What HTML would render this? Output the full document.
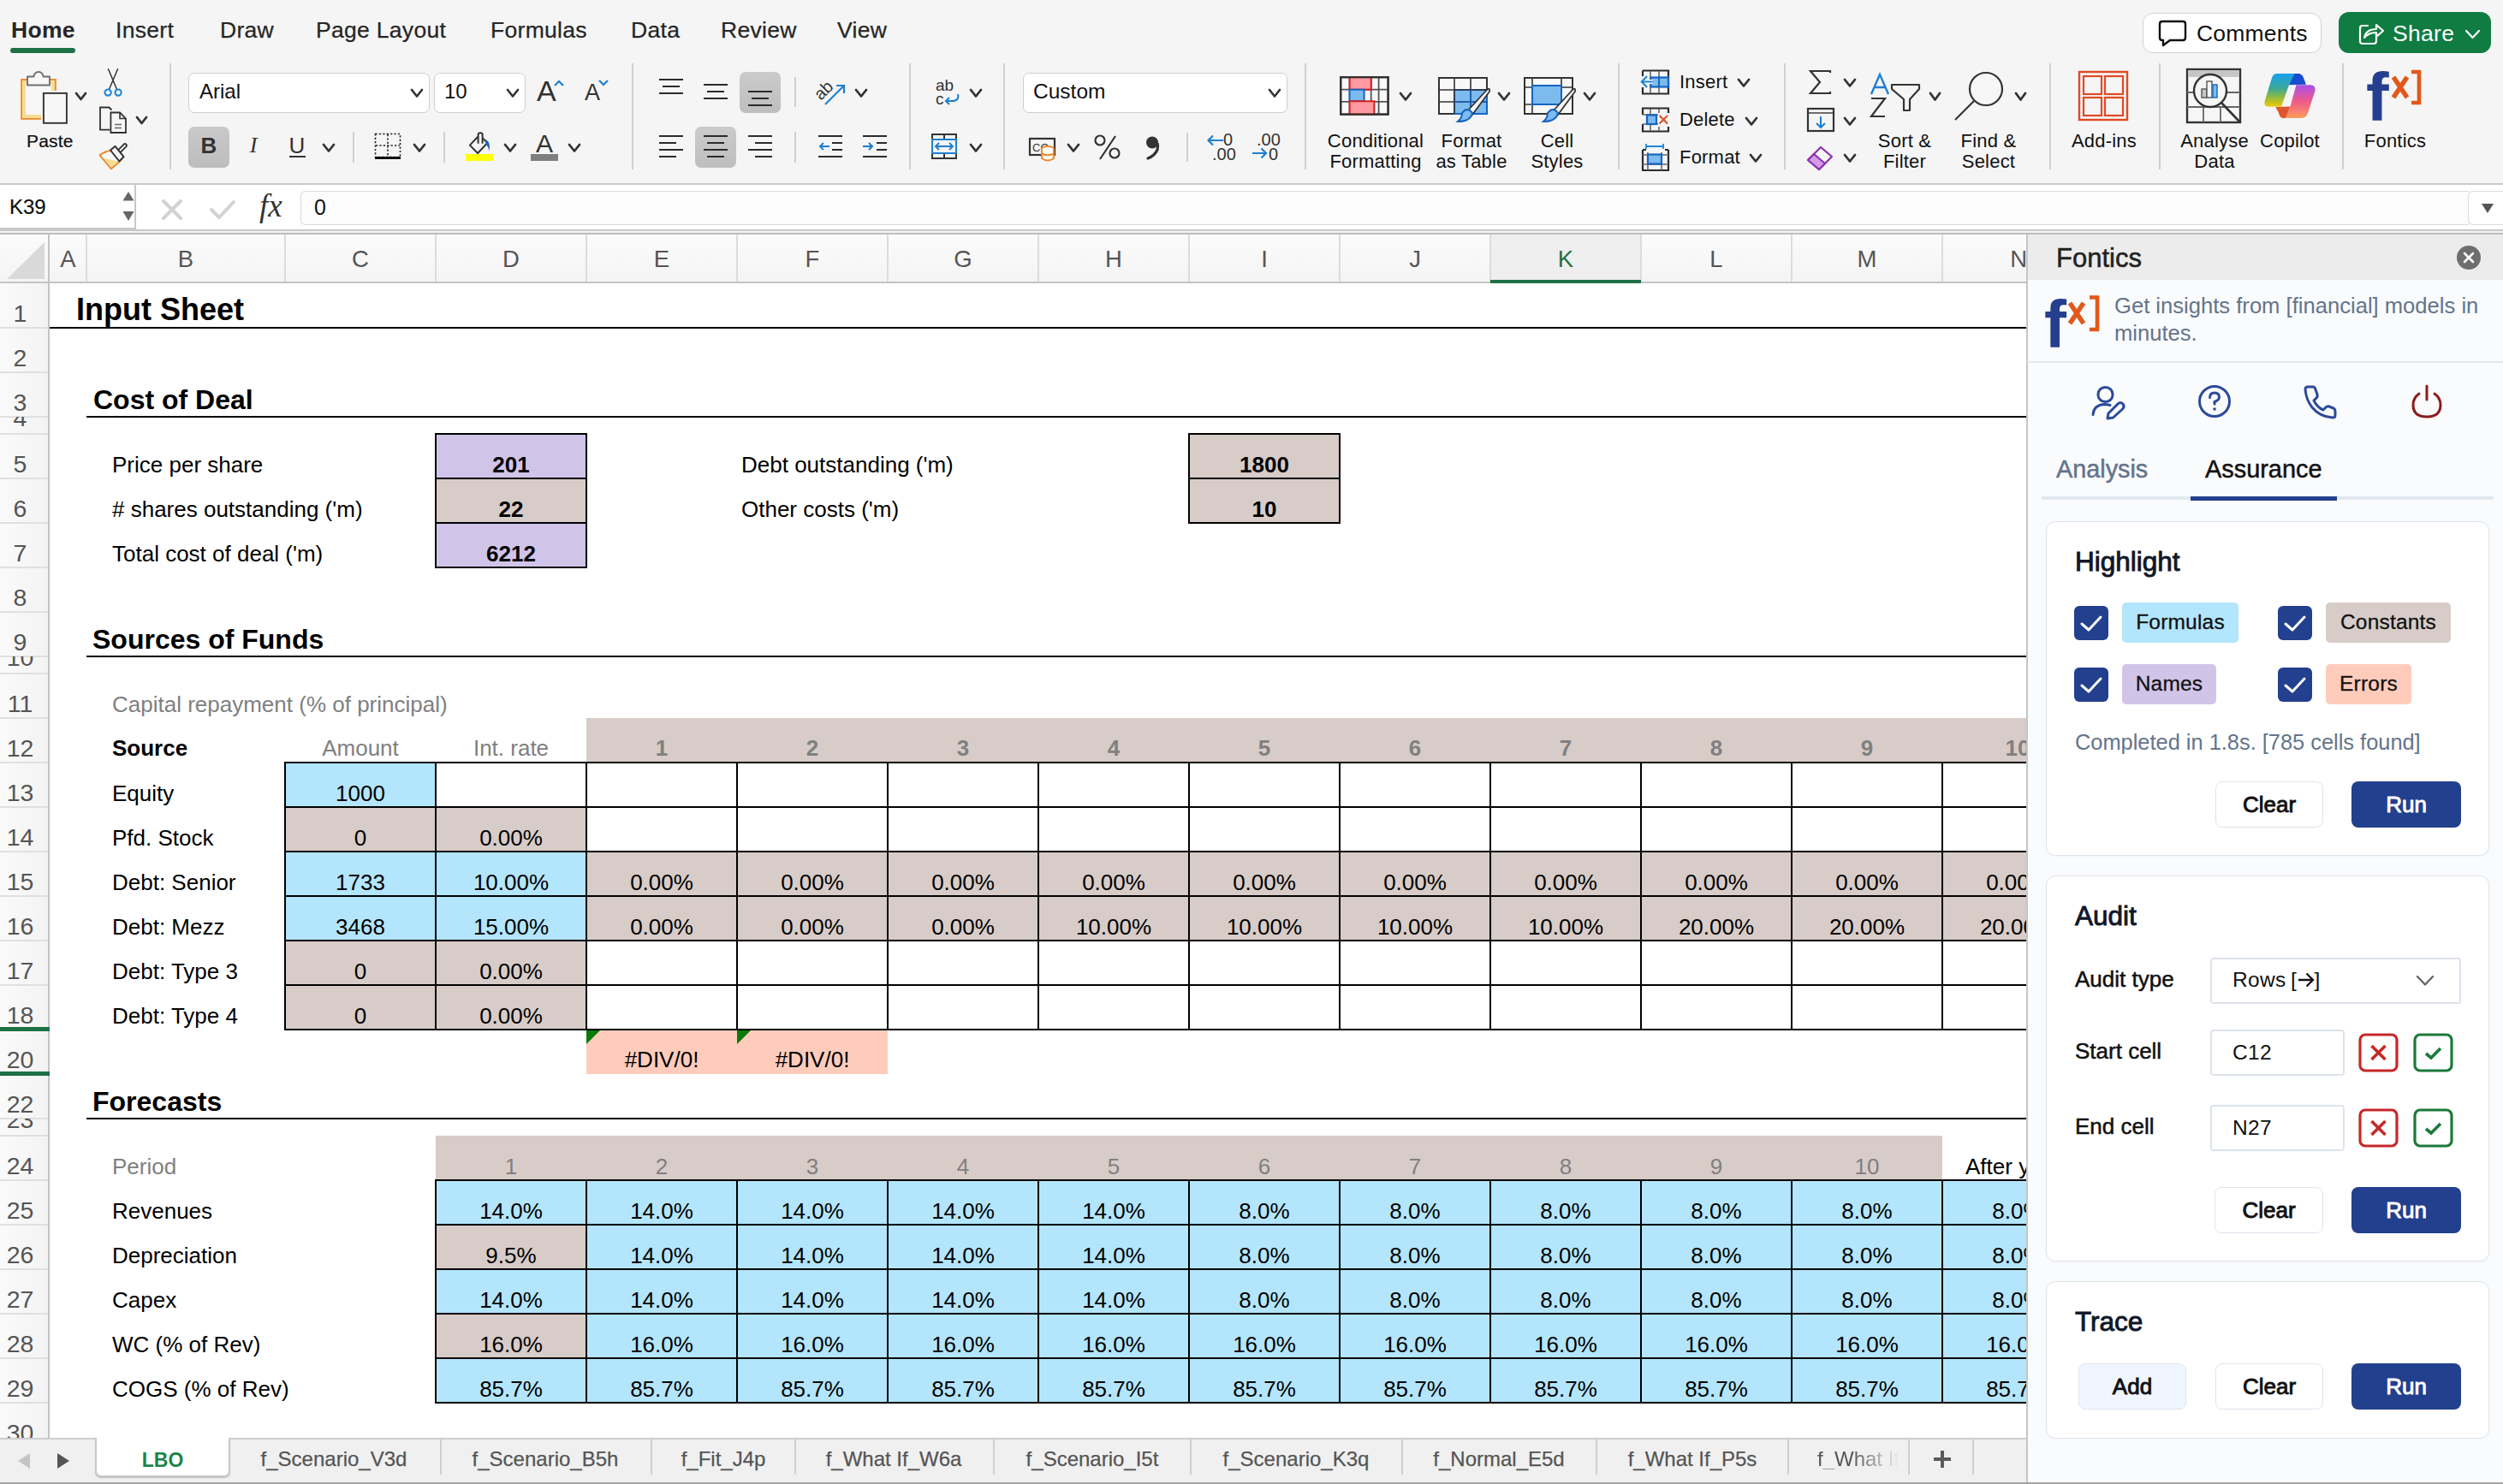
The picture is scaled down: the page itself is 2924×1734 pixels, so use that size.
<!DOCTYPE html>
<html><head><meta charset="utf-8"><title>Excel - Fontics</title>
<style>
html,body{margin:0;padding:0;}
body{width:2924px;height:1734px;position:relative;overflow:hidden;background:#f3f3f3;font-family:"Liberation Sans", sans-serif;}
.a{position:absolute;}
.t{white-space:nowrap;}
svg.a{overflow:visible;}
</style></head><body>
<div class="a" style="left:0px;top:0px;width:2924px;height:216px;background:#f5f5f5;"></div>
<div class="a" style="left:0px;top:214px;width:2924px;height:2px;background:#c9c9c9;"></div>
<div class="a t" style="top:22.07px;font-size:26.5px;line-height:26.5px;color:#262626;font-weight:700;letter-spacing:0.3px;left:13px;">Home</div>
<div class="a t" style="top:22.07px;font-size:26.5px;line-height:26.5px;color:#262626;-webkit-text-stroke:0.25px #262626;letter-spacing:0.3px;left:135px;">Insert</div>
<div class="a t" style="top:22.07px;font-size:26.5px;line-height:26.5px;color:#262626;-webkit-text-stroke:0.25px #262626;letter-spacing:0.3px;left:257px;">Draw</div>
<div class="a t" style="top:22.07px;font-size:26.5px;line-height:26.5px;color:#262626;-webkit-text-stroke:0.25px #262626;letter-spacing:0.3px;left:369px;">Page Layout</div>
<div class="a t" style="top:22.07px;font-size:26.5px;line-height:26.5px;color:#262626;-webkit-text-stroke:0.25px #262626;letter-spacing:0.3px;left:573px;">Formulas</div>
<div class="a t" style="top:22.07px;font-size:26.5px;line-height:26.5px;color:#262626;-webkit-text-stroke:0.25px #262626;letter-spacing:0.3px;left:737px;">Data</div>
<div class="a t" style="top:22.07px;font-size:26.5px;line-height:26.5px;color:#262626;-webkit-text-stroke:0.25px #262626;letter-spacing:0.3px;left:842px;">Review</div>
<div class="a t" style="top:22.07px;font-size:26.5px;line-height:26.5px;color:#262626;-webkit-text-stroke:0.25px #262626;letter-spacing:0.3px;left:978px;">View</div>
<div class="a" style="left:12px;top:56px;width:76px;height:6px;background:#1e7145;border-radius:3px;"></div>
<div class="a" style="left:2503px;top:14.5px;width:208.5px;height:47.0px;background:#fff;border:1.5px solid #d2d2d2;border-radius:12px;box-sizing:border-box;"></div>
<svg class="a" style="left:2520px;top:22px;" width="36" height="34" viewBox="0 0 36 34"><path d="M6 3 H30 Q33 3 33 6 V22 Q33 25 30 25 H15 L7 31 V25 H6 Q3 25 3 22 V6 Q3 3 6 3 Z" fill="none" stroke="#111" stroke-width="2.4" stroke-linejoin="round"/></svg>
<div class="a t" style="top:25.57px;font-size:26.5px;line-height:26.5px;color:#111;letter-spacing:0.2px;left:2566px;">Comments</div>
<div class="a" style="left:2732px;top:14px;width:178px;height:48px;background:#107c41;border-radius:12px;"></div>
<svg class="a" style="left:2752px;top:22px;" width="36" height="32" viewBox="0 0 36 32"><path d="M14 8 H8 Q5 8 5 11 V26 Q5 29 8 29 H21 Q24 29 24 26 V22" fill="none" stroke="#fff" stroke-width="2.2" stroke-linecap="round"/><path d="M10 22 Q12 12 24 12 V7 L32 14 L24 21 V16 Q15 16 10 22 Z" fill="none" stroke="#fff" stroke-width="2.2" stroke-linejoin="round"/></svg>
<div class="a t" style="top:25.57px;font-size:26.5px;line-height:26.5px;color:#fff;letter-spacing:0.3px;left:2795px;">Share</div>
<svg class="a" style="left:2879px;top:33.5px;" width="19" height="12" viewBox="0 0 19 12"><path d="M2 2 L9.5 10 L17 2" fill="none" stroke="#fff" stroke-width="2.2" stroke-linecap="round" stroke-linejoin="round"/></svg>
<div class="a" style="left:198px;top:74px;width:2px;height:124px;background:#d0d0d0;"></div>
<div class="a" style="left:738px;top:74px;width:2px;height:124px;background:#d0d0d0;"></div>
<div class="a" style="left:1062px;top:74px;width:2px;height:124px;background:#d0d0d0;"></div>
<div class="a" style="left:1172px;top:74px;width:2px;height:124px;background:#d0d0d0;"></div>
<div class="a" style="left:1524px;top:74px;width:2px;height:124px;background:#d0d0d0;"></div>
<div class="a" style="left:1890px;top:74px;width:2px;height:124px;background:#d0d0d0;"></div>
<div class="a" style="left:2084px;top:74px;width:2px;height:124px;background:#d0d0d0;"></div>
<div class="a" style="left:2394px;top:74px;width:2px;height:124px;background:#d0d0d0;"></div>
<div class="a" style="left:2522px;top:74px;width:2px;height:124px;background:#d0d0d0;"></div>
<div class="a" style="left:2736px;top:74px;width:2px;height:124px;background:#d0d0d0;"></div>
<div class="a" style="left:412px;top:154px;width:2px;height:36px;background:#d0d0d0;"></div>
<div class="a" style="left:518px;top:154px;width:2px;height:36px;background:#d0d0d0;"></div>
<div class="a" style="left:928px;top:90px;width:2px;height:35px;background:#d0d0d0;"></div>
<div class="a" style="left:928px;top:154px;width:2px;height:36px;background:#d0d0d0;"></div>
<div class="a" style="left:1386px;top:155px;width:2px;height:34px;background:#d0d0d0;"></div>
<svg class="a" style="left:15px;top:75px;" width="150" height="130" viewBox="0 0 150 130">
      <rect x="10.1" y="17.9" width="39.8" height="46" fill="#f8dc90" stroke="#ea8a2e" stroke-width="1.8"/>
      <rect x="15" y="23" width="30" height="36" fill="#f7f7f7"/>
      <path d="M17 24.5 V14.5 H24.5 A5.5 5.5 0 0 1 35.5 14.5 H43 V24.5 Z" fill="#f7f7f7" stroke="#707070" stroke-width="1.9" stroke-linejoin="round"/>
      <rect x="33" y="31" width="32" height="40" fill="#f5f5f5"/>
      <rect x="35.9" y="33.9" width="27" height="34.9" fill="#f7f7f7" stroke="#333" stroke-width="1.9"/>
      <path d="M111.3 5.3 L121.8 30 M122.7 5.3 L112.2 30" stroke="#333" stroke-width="1.5" fill="none"/>
      <circle cx="111.1" cy="33.1" r="3.6" fill="none" stroke="#1f88d8" stroke-width="2.2"/>
      <circle cx="123.1" cy="33.1" r="3.6" fill="none" stroke="#1f88d8" stroke-width="2.2"/>
      <path d="M113.5 76.7 H102 V50.5 H112.5 L115.5 53.5" fill="none" stroke="#333" stroke-width="1.8"/>
      <path d="M114.4 56.5 H125 L132 63.5 V80 H114.4 Z" fill="#f7f7f7" stroke="#333" stroke-width="1.8" stroke-linejoin="miter"/>
      <path d="M125 56.5 V63.5 H132" fill="none" stroke="#333" stroke-width="1.6"/>
      <path d="M119 70.5 H127 M119 74.5 H127" stroke="#666" stroke-width="1.6"/>
      <path d="M123.5 102.5 L131 95" stroke="#333" stroke-width="5.6" stroke-linecap="round"/>
      <path d="M123.5 102.5 L131 95" stroke="#f5f5f5" stroke-width="1.8" stroke-linecap="round"/>
      <path d="M101.6 106.4 Q108 101.5 115.6 100.8 L125.3 113 Q120 118 114.8 122.2 Z" fill="#f8f8f8" stroke="#ea8a2e" stroke-width="2" stroke-linejoin="round"/>
      <path d="M106.5 110 L123 113.5 L115 120 Z" fill="#f8dc90"/>
      <path d="M114 100.5 L119.6 95.8 L129.5 108.2 L124.4 113.5 Z" fill="#f5f5f5" stroke="#333" stroke-width="2" stroke-linejoin="round"/>
    </svg>
<svg class="a" style="left:86.5px;top:106.5px;" width="15" height="11" viewBox="0 0 15 11"><path d="M2 2 L7.5 9 L13 2" fill="none" stroke="#333" stroke-width="2.8" stroke-linecap="round" stroke-linejoin="round"/></svg>
<div class="a t" style="top:153.72px;font-size:21px;line-height:21px;color:#111;-webkit-text-stroke:0.2px #111;letter-spacing:0.2px;left:31px;">Paste</div>
<svg class="a" style="left:158px;top:135px;" width="15" height="11" viewBox="0 0 15 11"><path d="M2 2 L7.5 9 L13 2" fill="none" stroke="#333" stroke-width="2.8" stroke-linecap="round" stroke-linejoin="round"/></svg>
<div class="a" style="left:220px;top:84.5px;width:281.5px;height:47.0px;background:#fff;border:1.5px solid #cfcfcf;border-radius:7px;box-sizing:border-box;"></div>
<div class="a t" style="top:95.18px;font-size:24px;line-height:24px;color:#111;left:233px;">Arial</div>
<svg class="a" style="left:479px;top:103px;" width="16" height="11.5" viewBox="0 0 16 11.5"><path d="M2 2 L8.0 9.5 L14 2" fill="none" stroke="#333" stroke-width="2.6" stroke-linecap="round" stroke-linejoin="round"/></svg>
<div class="a" style="left:506.5px;top:84.5px;width:107.5px;height:47.0px;background:#fff;border:1.5px solid #cfcfcf;border-radius:7px;box-sizing:border-box;"></div>
<div class="a t" style="top:95.18px;font-size:24px;line-height:24px;color:#111;left:519px;">10</div>
<svg class="a" style="left:591px;top:103px;" width="16" height="11.5" viewBox="0 0 16 11.5"><path d="M2 2 L8.0 9.5 L14 2" fill="none" stroke="#333" stroke-width="2.6" stroke-linecap="round" stroke-linejoin="round"/></svg>
<div class="a t" style="top:89.22px;font-size:34px;line-height:34px;color:#333;left:627px;">A</div>
<svg class="a" style="left:646px;top:92px;" width="14" height="10" viewBox="0 0 14 10"><path d="M2 8 L7 3 L12 8" fill="none" stroke="#1f7fd0" stroke-width="2.2"/></svg>
<div class="a t" style="top:95.14px;font-size:27px;line-height:27px;color:#333;left:683px;">A</div>
<svg class="a" style="left:698px;top:92px;" width="14" height="10" viewBox="0 0 14 10"><path d="M2 2 L7 7 L12 2" fill="none" stroke="#1f7fd0" stroke-width="2.2"/></svg>
<div class="a" style="left:220px;top:148px;width:48px;height:48px;background:linear-gradient(#c9c9c9,#bdbdbd);border-radius:7px;"></div>
<div class="a t" style="top:156.99px;font-size:26px;line-height:26px;color:#333;font-weight:700;left:-756px;width:2000px;text-align:center;">B</div>
<div class="a t" style="top:156.99px;font-size:26px;line-height:26px;color:#333;font-family:'Liberation Serif', serif;left:-704px;width:2000px;text-align:center;font-style:italic;">I</div>
<div class="a t" style="top:156.99px;font-size:26px;line-height:26px;color:#333;left:-653px;width:2000px;text-align:center;">U</div>
<div class="a" style="left:338px;top:182px;width:19px;height:2px;background:#333;"></div>
<svg class="a" style="left:376px;top:167px;" width="16" height="11.5" viewBox="0 0 16 11.5"><path d="M2 2 L8.0 9.5 L14 2" fill="none" stroke="#333" stroke-width="2.8" stroke-linecap="round" stroke-linejoin="round"/></svg>
<svg class="a" style="left:436px;top:154px;" width="34" height="34" viewBox="0 0 34 34"><rect x="2.5" y="2.5" width="29" height="27" fill="none" stroke="#222" stroke-width="1.6" stroke-dasharray="2.2 2.2"/><path d="M17 3 V30 M3 16 H31" stroke="#222" stroke-width="1.6" stroke-dasharray="2.2 2.2"/><rect x="2" y="29" width="30" height="3" fill="#111"/></svg>
<svg class="a" style="left:482px;top:167px;" width="16" height="11.5" viewBox="0 0 16 11.5"><path d="M2 2 L8.0 9.5 L14 2" fill="none" stroke="#333" stroke-width="2.8" stroke-linecap="round" stroke-linejoin="round"/></svg>
<svg class="a" style="left:540px;top:150px;" width="40" height="40" viewBox="0 0 40 40">
      <path d="M18.5 9.5 L8.9 19.6 L18.1 29 L29.4 17 L24 11.5" fill="none" stroke="#333" stroke-width="2" stroke-linejoin="round"/>
      <path d="M18.6 17.7 V7.3 Q18.6 5.2 21.1 5.2 Q23.6 5.2 23.6 7.3 V17.7" fill="none" stroke="#333" stroke-width="2"/>
      <path d="M26.5 13.2 Q30.8 13.5 31.8 19.5 Q32.2 23.5 31.6 26.5 Q30.3 21 27.3 17.5 Z" fill="#1565c0"/>
      <rect x="4" y="30" width="32" height="8" fill="#ffff00"/>
    </svg>
<svg class="a" style="left:588px;top:167px;" width="16" height="11.5" viewBox="0 0 16 11.5"><path d="M2 2 L8.0 9.5 L14 2" fill="none" stroke="#333" stroke-width="2.8" stroke-linecap="round" stroke-linejoin="round"/></svg>
<div class="a t" style="top:152.60px;font-size:30px;line-height:30px;color:#333;left:-364px;width:2000px;text-align:center;">A</div>
<div class="a" style="left:620px;top:180px;width:32px;height:8px;background:#7f7f7f;"></div>
<svg class="a" style="left:663px;top:167px;" width="16" height="11.5" viewBox="0 0 16 11.5"><path d="M2 2 L8.0 9.5 L14 2" fill="none" stroke="#333" stroke-width="2.8" stroke-linecap="round" stroke-linejoin="round"/></svg>
<div class="a" style="left:770.0px;top:91.7px;width:28.0px;height:2.5999999999999943px;background:#2b2b2b;"></div>
<div class="a" style="left:774.0px;top:99.7px;width:20.0px;height:2.5999999999999943px;background:#2b2b2b;"></div>
<div class="a" style="left:770.0px;top:107.7px;width:28.0px;height:2.5999999999999943px;background:#2b2b2b;"></div>
<div class="a" style="left:822.0px;top:97.7px;width:28.0px;height:2.5999999999999943px;background:#2b2b2b;"></div>
<div class="a" style="left:826.0px;top:105.7px;width:20.0px;height:2.5999999999999943px;background:#2b2b2b;"></div>
<div class="a" style="left:822.0px;top:113.7px;width:28.0px;height:2.5999999999999943px;background:#2b2b2b;"></div>
<div class="a" style="left:864px;top:84px;width:48px;height:48px;background:linear-gradient(#cbcbcb,#bebebe);border-radius:7px;"></div>
<div class="a" style="left:874.0px;top:105.7px;width:28.0px;height:2.5999999999999943px;background:#2b2b2b;"></div>
<div class="a" style="left:878.0px;top:113.7px;width:20.0px;height:2.5999999999999943px;background:#2b2b2b;"></div>
<div class="a" style="left:874.0px;top:121.7px;width:28.0px;height:2.5999999999999943px;background:#2b2b2b;"></div>
<svg class="a" style="left:950px;top:88px;" width="40" height="38" viewBox="0 0 40 38">
      <text x="0" y="0" transform="translate(9,30) rotate(-45)" font-family="Liberation Sans" font-size="20" fill="#333">ab</text>
      <path d="M14 34 L35 13" stroke="#1f7fd0" stroke-width="2.2"/>
      <path d="M27 12 H36 V21" fill="none" stroke="#1f7fd0" stroke-width="2.2"/>
    </svg>
<svg class="a" style="left:998px;top:103px;" width="16" height="11.5" viewBox="0 0 16 11.5"><path d="M2 2 L8.0 9.5 L14 2" fill="none" stroke="#333" stroke-width="2.8" stroke-linecap="round" stroke-linejoin="round"/></svg>
<svg class="a" style="left:1090px;top:88px;" width="34" height="40" viewBox="0 0 34 40">
      <text x="3" y="18" font-family="Liberation Sans" font-size="19" fill="#333">ab</text>
      <text x="3" y="34" font-family="Liberation Sans" font-size="19" fill="#333">c</text>
      <path d="M29 22 Q31 30 22 30 H15" fill="none" stroke="#1f7fd0" stroke-width="2"/>
      <path d="M19 26 L15 30 L19 34" fill="none" stroke="#1f7fd0" stroke-width="2"/>
    </svg>
<svg class="a" style="left:1132px;top:103px;" width="16" height="11.5" viewBox="0 0 16 11.5"><path d="M2 2 L8.0 9.5 L14 2" fill="none" stroke="#333" stroke-width="2.8" stroke-linecap="round" stroke-linejoin="round"/></svg>
<div class="a" style="left:770px;top:157.7px;width:28px;height:2.6000000000000227px;background:#2b2b2b;"></div>
<div class="a" style="left:770px;top:165.7px;width:20px;height:2.6000000000000227px;background:#2b2b2b;"></div>
<div class="a" style="left:770px;top:173.7px;width:28px;height:2.6000000000000227px;background:#2b2b2b;"></div>
<div class="a" style="left:770px;top:181.7px;width:20px;height:2.6000000000000227px;background:#2b2b2b;"></div>
<div class="a" style="left:812px;top:148px;width:48px;height:48px;background:linear-gradient(#cbcbcb,#bebebe);border-radius:7px;"></div>
<div class="a" style="left:822.0px;top:157.7px;width:28.0px;height:2.6000000000000227px;background:#2b2b2b;"></div>
<div class="a" style="left:826.0px;top:165.7px;width:20.0px;height:2.6000000000000227px;background:#2b2b2b;"></div>
<div class="a" style="left:822.0px;top:173.7px;width:28.0px;height:2.6000000000000227px;background:#2b2b2b;"></div>
<div class="a" style="left:826.0px;top:181.7px;width:20.0px;height:2.6000000000000227px;background:#2b2b2b;"></div>
<div class="a" style="left:874px;top:157.7px;width:28px;height:2.6000000000000227px;background:#2b2b2b;"></div>
<div class="a" style="left:882px;top:165.7px;width:20px;height:2.6000000000000227px;background:#2b2b2b;"></div>
<div class="a" style="left:874px;top:173.7px;width:28px;height:2.6000000000000227px;background:#2b2b2b;"></div>
<div class="a" style="left:882px;top:181.7px;width:20px;height:2.6000000000000227px;background:#2b2b2b;"></div>
<div class="a" style="left:956px;top:157.7px;width:28px;height:2.6000000000000227px;background:#2b2b2b;"></div>
<div class="a" style="left:956px;top:181.7px;width:28px;height:2.6000000000000227px;background:#2b2b2b;"></div>
<div class="a" style="left:972px;top:165.7px;width:12px;height:2.6000000000000227px;background:#2b2b2b;"></div>
<div class="a" style="left:972px;top:173.7px;width:12px;height:2.6000000000000227px;background:#2b2b2b;"></div>
<svg class="a" style="left:955px;top:163px;" width="16" height="16" viewBox="0 0 16 16"><path d="M14 8 H3 M7 4 L3 8 L7 12" fill="none" stroke="#1f7fd0" stroke-width="2"/></svg>
<div class="a" style="left:1008px;top:157.7px;width:28px;height:2.6000000000000227px;background:#2b2b2b;"></div>
<div class="a" style="left:1008px;top:181.7px;width:28px;height:2.6000000000000227px;background:#2b2b2b;"></div>
<div class="a" style="left:1024px;top:165.7px;width:12px;height:2.6000000000000227px;background:#2b2b2b;"></div>
<div class="a" style="left:1024px;top:173.7px;width:12px;height:2.6000000000000227px;background:#2b2b2b;"></div>
<svg class="a" style="left:1007px;top:163px;" width="16" height="16" viewBox="0 0 16 16"><path d="M1 8 H12 M8 4 L12 8 L8 12" fill="none" stroke="#1f7fd0" stroke-width="2"/></svg>
<svg class="a" style="left:1086px;top:154px;" width="34" height="34" viewBox="0 0 34 34">
      <rect x="3" y="3" width="28" height="28" fill="none" stroke="#333" stroke-width="2"/>
      <path d="M17 3 V31" stroke="#333" stroke-width="2"/>
      <rect x="3" y="9" width="28" height="16" fill="#f5f5f5" stroke="#1f7fd0" stroke-width="2"/>
      <path d="M8 17 H26 M11 13 L7 17 L11 21 M23 13 L27 17 L23 21" fill="none" stroke="#1f7fd0" stroke-width="2"/>
    </svg>
<svg class="a" style="left:1132px;top:167px;" width="16" height="11.5" viewBox="0 0 16 11.5"><path d="M2 2 L8.0 9.5 L14 2" fill="none" stroke="#333" stroke-width="2.8" stroke-linecap="round" stroke-linejoin="round"/></svg>
<div class="a" style="left:1194.5px;top:84.5px;width:309.0px;height:47.0px;background:#fff;border:1.5px solid #cfcfcf;border-radius:7px;box-sizing:border-box;"></div>
<div class="a t" style="top:95.26px;font-size:24.5px;line-height:24.5px;color:#111;left:1207px;">Custom</div>
<svg class="a" style="left:1481px;top:103px;" width="16" height="11.5" viewBox="0 0 16 11.5"><path d="M2 2 L8.0 9.5 L14 2" fill="none" stroke="#333" stroke-width="2.6" stroke-linecap="round" stroke-linejoin="round"/></svg>
<svg class="a" style="left:1200px;top:160px;" width="38" height="30" viewBox="0 0 38 30">
      <rect x="3" y="2" width="29" height="19" fill="none" stroke="#333" stroke-width="2.2"/>
      <text x="6" y="17" font-family="Liberation Sans" font-size="13" fill="#333">CC</text>
      <ellipse cx="24" cy="14" rx="7" ry="3" fill="#fff" stroke="#ea8a2e" stroke-width="2"/>
      <path d="M17 14 V25 Q24 30 31 25 V14" fill="#fff" stroke="#ea8a2e" stroke-width="2"/>
      <path d="M17 19.5 Q24 23 31 19.5" fill="none" stroke="#ea8a2e" stroke-width="2"/>
    </svg>
<svg class="a" style="left:1246px;top:167px;" width="16" height="11.5" viewBox="0 0 16 11.5"><path d="M2 2 L8.0 9.5 L14 2" fill="none" stroke="#333" stroke-width="2.8" stroke-linecap="round" stroke-linejoin="round"/></svg>
<svg class="a" style="left:1277px;top:156px;" width="34" height="32" viewBox="0 0 34 32"><circle cx="8" cy="8" r="5.5" fill="none" stroke="#333" stroke-width="2.2"/><circle cx="25" cy="23" r="5.5" fill="none" stroke="#333" stroke-width="2.2"/><path d="M26 3 L8 30" stroke="#333" stroke-width="2.2"/></svg>
<svg class="a" style="left:1336px;top:158px;" width="22" height="30" viewBox="0 0 22 30"><circle cx="10" cy="8.5" r="7" fill="#333"/><path d="M13 6 Q18 9 16 17 Q13 24 5 27" fill="none" stroke="#333" stroke-width="3.2" stroke-linecap="round"/></svg>
<svg class="a" style="left:1408px;top:154px;" width="40" height="36" viewBox="0 0 40 36">
      <text x="21" y="16" font-family="Liberation Sans" font-size="20" fill="#333">0</text>
      <text x="8" y="33" font-family="Liberation Sans" font-size="20" fill="#333">.00</text>
      <path d="M21 10 H4 M9 4.5 L3.5 10 L9 15.5" fill="none" stroke="#1f7fd0" stroke-width="2.2"/>
    </svg>
<svg class="a" style="left:1460px;top:154px;" width="40" height="36" viewBox="0 0 40 36">
      <text x="8" y="16" font-family="Liberation Sans" font-size="20" fill="#333">.00</text>
      <text x="22" y="33" font-family="Liberation Sans" font-size="20" fill="#333">0</text>
      <path d="M3 25 H19 M13.5 19.5 L19 25 L13.5 30.5" fill="none" stroke="#1f7fd0" stroke-width="2.2"/>
    </svg>
<svg class="a" style="left:1562px;top:86px;" width="64" height="52" viewBox="0 0 64 52">
      <rect x="4.2" y="4.2" width="55.4" height="43.4" fill="#f8f8f8" stroke="#333" stroke-width="2.2"/>
      <path d="M14.6 4 V48 M39.7 4 V48 M48.6 4 V48 M4 18.7 H60 M4 32.8 H60" stroke="#555" stroke-width="1.8"/>
      <rect x="14.6" y="4.2" width="25.1" height="14.5" fill="#ff9aa2" stroke="#d42020" stroke-width="2"/>
      <rect x="14.6" y="18.7" width="17" height="13.6" fill="#7dbbef" stroke="#1565c0" stroke-width="2"/>
      <rect x="14.6" y="32.3" width="28.8" height="15.3" fill="#ff9aa2" stroke="#d42020" stroke-width="2"/>
      <rect x="4.2" y="4.2" width="55.4" height="43.4" fill="none" stroke="#333" stroke-width="2.2"/>
    </svg>
<svg class="a" style="left:1634px;top:107px;" width="16" height="11.5" viewBox="0 0 16 11.5"><path d="M2 2 L8.0 9.5 L14 2" fill="none" stroke="#333" stroke-width="2.8" stroke-linecap="round" stroke-linejoin="round"/></svg>
<div class="a t" style="top:154.38px;font-size:22px;line-height:22px;color:#111;letter-spacing:0.2px;left:607px;width:2000px;text-align:center;">Conditional</div>
<div class="a t" style="top:178.38px;font-size:22px;line-height:22px;color:#111;letter-spacing:0.2px;left:607px;width:2000px;text-align:center;">Formatting</div>
<svg class="a" style="left:1678px;top:88px;" width="66" height="58" viewBox="0 0 66 58">
      <rect x="3" y="3" width="56" height="42" fill="#f8f8f8" stroke="#333" stroke-width="2"/>
      <rect x="21" y="17" width="38" height="28" fill="#7dbbef" stroke="#1565c0" stroke-width="2"/>
      <path d="M21 3 V45 M40 3 V45 M3 17 H59 M3 31 H59" stroke="#333" stroke-width="1.6"/>
      <path d="M40 17 V45 M21 31 H59" stroke="#1565c0" stroke-width="1.6"/>
      <path d="M36 42 L58 18 Q63 13 62 19 L42 46 Z" fill="#f4f4f4" stroke="#333" stroke-width="1.8"/>
      <path d="M30 44 Q36 36 42 44 Q40 54 25 54 Q30 50 30 44 Z" fill="#7dbbef" stroke="#1565c0" stroke-width="2"/>
    </svg>
<svg class="a" style="left:1749px;top:107px;" width="16" height="11.5" viewBox="0 0 16 11.5"><path d="M2 2 L8.0 9.5 L14 2" fill="none" stroke="#333" stroke-width="2.8" stroke-linecap="round" stroke-linejoin="round"/></svg>
<div class="a t" style="top:154.38px;font-size:22px;line-height:22px;color:#111;letter-spacing:0.2px;left:719px;width:2000px;text-align:center;">Format</div>
<div class="a t" style="top:178.38px;font-size:22px;line-height:22px;color:#111;letter-spacing:0.2px;left:719px;width:2000px;text-align:center;">as Table</div>
<svg class="a" style="left:1778px;top:88px;" width="66" height="58" viewBox="0 0 66 58">
      <rect x="3" y="3" width="56" height="42" fill="#f8f8f8" stroke="#333" stroke-width="2"/>
      <path d="M12 3 V45 M46 3 V14 M3 14 H59 M3 34 H12" stroke="#333" stroke-width="1.6"/>
      <rect x="12" y="12" width="34" height="22" fill="#7dbbef" stroke="#1565c0" stroke-width="2"/>
      <path d="M36 42 L58 18 Q63 13 62 19 L42 46 Z" fill="#f4f4f4" stroke="#333" stroke-width="1.8"/>
      <path d="M30 44 Q36 36 42 44 Q40 54 25 54 Q30 50 30 44 Z" fill="#7dbbef" stroke="#1565c0" stroke-width="2"/>
    </svg>
<svg class="a" style="left:1849px;top:107px;" width="16" height="11.5" viewBox="0 0 16 11.5"><path d="M2 2 L8.0 9.5 L14 2" fill="none" stroke="#333" stroke-width="2.8" stroke-linecap="round" stroke-linejoin="round"/></svg>
<div class="a t" style="top:154.38px;font-size:22px;line-height:22px;color:#111;letter-spacing:0.2px;left:819px;width:2000px;text-align:center;">Cell</div>
<div class="a t" style="top:178.38px;font-size:22px;line-height:22px;color:#111;letter-spacing:0.2px;left:819px;width:2000px;text-align:center;">Styles</div>
<svg class="a" style="left:1915px;top:80px;" width="38" height="32" viewBox="0 0 38 32">
      <path d="M4 2.5 H34 V29.5 H4 V22 M4 9 V2.5" fill="none" stroke="#2b2b2b" stroke-width="2.2"/>
      <path d="M13 3 V29 M23 3 V29" stroke="#666" stroke-width="1.6"/>
      <rect x="13.5" y="10.5" width="20.5" height="11" fill="#7dbbef" stroke="#1565c0" stroke-width="2.2"/>
      <path d="M23 10.5 V21.5" stroke="#1565c0" stroke-width="2"/>
      <path d="M3 15.5 H16 M9 9 L2.8 15.5 L9 22" fill="none" stroke="#f5f5f5" stroke-width="5"/>
      <path d="M3 15.5 H16 M9 9 L2.8 15.5 L9 22" fill="none" stroke="#1f88d8" stroke-width="2.2"/>
    </svg>
<div class="a t" style="top:84.88px;font-size:22px;line-height:22px;color:#111;letter-spacing:0.2px;left:1962px;">Insert</div>
<svg class="a" style="left:2029px;top:91px;" width="16" height="11.5" viewBox="0 0 16 11.5"><path d="M2 2 L8.0 9.5 L14 2" fill="none" stroke="#333" stroke-width="2.8" stroke-linecap="round" stroke-linejoin="round"/></svg>
<svg class="a" style="left:1915px;top:124px;" width="38" height="32" viewBox="0 0 38 32">
      <path d="M4 10 V2.5 H34 V10 M4 21 V29.5 H34 V21" fill="none" stroke="#2b2b2b" stroke-width="2.2"/>
      <path d="M13 3 V10 M23 3 V10 M13 21 V29 M23 21 V29 M4 10 H34 M4 21 H34" stroke="#666" stroke-width="1.6"/>
      <rect x="9" y="10.5" width="11" height="10.5" fill="#7dbbef" stroke="#1565c0" stroke-width="2.2"/>
      <rect x="22" y="8" width="14" height="16" fill="#f5f5f5"/>
      <path d="M23.5 11 L33 20.5 M33 11 L23.5 20.5" stroke="#e0502a" stroke-width="2.2"/>
    </svg>
<div class="a t" style="top:129.38px;font-size:22px;line-height:22px;color:#111;letter-spacing:0.2px;left:1962px;">Delete</div>
<svg class="a" style="left:2038px;top:135.5px;" width="16" height="11.5" viewBox="0 0 16 11.5"><path d="M2 2 L8.0 9.5 L14 2" fill="none" stroke="#333" stroke-width="2.8" stroke-linecap="round" stroke-linejoin="round"/></svg>
<svg class="a" style="left:1915px;top:166px;" width="38" height="36" viewBox="0 0 38 36">
      <path d="M4 9 V33 H34 V9" fill="none" stroke="#2b2b2b" stroke-width="2.2"/>
      <path d="M4 9 H8 M30 9 H34" stroke="#2b2b2b" stroke-width="2.2"/>
      <path d="M10 12 V33 M26 12 V33 M4 15 H34 M4 26 H34" stroke="#666" stroke-width="1.6"/>
      <rect x="10" y="14.5" width="16" height="11" fill="#7dbbef" stroke="#1565c0" stroke-width="2.2"/>
      <path d="M8 5 H28 M8 2 V8 M28 2 V8" stroke="#1f88d8" stroke-width="1.8"/>
    </svg>
<div class="a t" style="top:172.88px;font-size:22px;line-height:22px;color:#111;letter-spacing:0.2px;left:1962px;">Format</div>
<svg class="a" style="left:2043px;top:179px;" width="16" height="11.5" viewBox="0 0 16 11.5"><path d="M2 2 L8.0 9.5 L14 2" fill="none" stroke="#333" stroke-width="2.8" stroke-linecap="round" stroke-linejoin="round"/></svg>
<svg class="a" style="left:2112px;top:80px;" width="30" height="32" viewBox="0 0 30 32"><path d="M26 5 V3 H3 L14 16 L3 29 H26 V27" fill="none" stroke="#333" stroke-width="2.2"/></svg>
<svg class="a" style="left:2153px;top:91px;" width="16" height="11.5" viewBox="0 0 16 11.5"><path d="M2 2 L8.0 9.5 L14 2" fill="none" stroke="#333" stroke-width="2.8" stroke-linecap="round" stroke-linejoin="round"/></svg>
<svg class="a" style="left:2109px;top:124px;" width="36" height="32" viewBox="0 0 36 32"><rect x="3" y="3" width="30" height="26" fill="none" stroke="#333" stroke-width="2.2"/><path d="M3 8 H33" stroke="#333" stroke-width="1.4"/><path d="M18 12 V25 M13 20 L18 25 L23 20" fill="none" stroke="#1f7fd0" stroke-width="2"/></svg>
<svg class="a" style="left:2153px;top:135.5px;" width="16" height="11.5" viewBox="0 0 16 11.5"><path d="M2 2 L8.0 9.5 L14 2" fill="none" stroke="#333" stroke-width="2.8" stroke-linecap="round" stroke-linejoin="round"/></svg>
<svg class="a" style="left:2109px;top:166px;" width="36" height="36" viewBox="0 0 36 36"><path d="M3 21 L18 6 L31 17 L16 32 Z" fill="#f6f6f6" stroke="#8e2fb0" stroke-width="2.2" stroke-linejoin="round"/><path d="M3 21 L10 14 L23 25 L16 32 Z" fill="#d59be8" stroke="#8e2fb0" stroke-width="2.2" stroke-linejoin="round"/></svg>
<svg class="a" style="left:2153px;top:179px;" width="16" height="11.5" viewBox="0 0 16 11.5"><path d="M2 2 L8.0 9.5 L14 2" fill="none" stroke="#333" stroke-width="2.8" stroke-linecap="round" stroke-linejoin="round"/></svg>
<svg class="a" style="left:2182px;top:84px;" width="28" height="28" viewBox="0 0 28 28"><path d="M4 26 L14 3 L24 26 M8 18 H20" fill="none" stroke="#1f7fd0" stroke-width="2.4"/></svg>
<svg class="a" style="left:2182px;top:112px;" width="26" height="28" viewBox="0 0 26 28"><path d="M4 3 H20 L4 24 H20" fill="none" stroke="#333" stroke-width="2.2"/></svg>
<svg class="a" style="left:2207px;top:96px;" width="38" height="36" viewBox="0 0 38 36"><path d="M3 3 H35 V8 L24 20 V33 H17 V20 L3 8 Z" fill="#f6f6f6" stroke="#333" stroke-width="2.2" stroke-linejoin="round"/></svg>
<svg class="a" style="left:2253px;top:106.5px;" width="15" height="11.5" viewBox="0 0 15 11.5"><path d="M2 2 L7.5 9.5 L13 2" fill="none" stroke="#333" stroke-width="2.8" stroke-linecap="round" stroke-linejoin="round"/></svg>
<div class="a t" style="top:154.38px;font-size:22px;line-height:22px;color:#111;letter-spacing:0.2px;left:1225px;width:2000px;text-align:center;">Sort &amp;</div>
<div class="a t" style="top:178.38px;font-size:22px;line-height:22px;color:#111;letter-spacing:0.2px;left:1225px;width:2000px;text-align:center;">Filter</div>
<svg class="a" style="left:2280px;top:82px;" width="64" height="62" viewBox="0 0 64 62"><circle cx="40" cy="22" r="19" fill="#f6f6f6" stroke="#333" stroke-width="2.2"/><path d="M26 36 L4 58" stroke="#333" stroke-width="2.2"/></svg>
<svg class="a" style="left:2353px;top:106.5px;" width="15" height="11.5" viewBox="0 0 15 11.5"><path d="M2 2 L7.5 9.5 L13 2" fill="none" stroke="#333" stroke-width="2.8" stroke-linecap="round" stroke-linejoin="round"/></svg>
<div class="a t" style="top:154.38px;font-size:22px;line-height:22px;color:#111;letter-spacing:0.2px;left:1323px;width:2000px;text-align:center;">Find &amp;</div>
<div class="a t" style="top:178.38px;font-size:22px;line-height:22px;color:#111;letter-spacing:0.2px;left:1323px;width:2000px;text-align:center;">Select</div>
<svg class="a" style="left:2426px;top:81px;" width="62" height="62" viewBox="0 0 62 62"><rect x="3" y="3" width="56" height="56" fill="none" stroke="#e04a22" stroke-width="2.4"/><rect x="8" y="8" width="21" height="21" fill="none" stroke="#e04a22" stroke-width="2.2"/><rect x="33" y="8" width="21" height="21" fill="none" stroke="#e04a22" stroke-width="2.2"/><rect x="8" y="33" width="21" height="21" fill="none" stroke="#e04a22" stroke-width="2.2"/><rect x="33" y="33" width="21" height="21" fill="none" stroke="#e04a22" stroke-width="2.2"/></svg>
<div class="a t" style="top:154.38px;font-size:22px;line-height:22px;color:#111;letter-spacing:0.2px;left:1458px;width:2000px;text-align:center;">Add-ins</div>
<svg class="a" style="left:2552px;top:78px;" width="68" height="68" viewBox="0 0 68 68">
      <rect x="3" y="3" width="62" height="62" fill="#f6f6f6" stroke="#333" stroke-width="2.4"/>
      <rect x="4" y="4" width="60" height="8" fill="#c6c6c6"/>
      <path d="M3 30 H65 M3 47 H65 M22 47 V65 M42 47 V65" stroke="#666" stroke-width="1.8"/>
      <circle cx="30" cy="28" r="19" fill="#f6f6f6" stroke="#333" stroke-width="2.4"/>
      <rect x="20" y="26" width="6" height="10" fill="#c6c6c6" stroke="#555" stroke-width="1.4"/>
      <rect x="26" y="17" width="6" height="19" fill="#f6f6f6" stroke="#555" stroke-width="1.4"/>
      <rect x="33" y="21" width="5" height="15" fill="#7dbbef" stroke="#1565c0" stroke-width="1.4"/>
      <path d="M43 42 L64 64" stroke="#333" stroke-width="2.6"/>
    </svg>
<div class="a t" style="top:154.38px;font-size:22px;line-height:22px;color:#111;letter-spacing:0.2px;left:1587px;width:2000px;text-align:center;">Analyse</div>
<div class="a t" style="top:178.38px;font-size:22px;line-height:22px;color:#111;letter-spacing:0.2px;left:1587px;width:2000px;text-align:center;">Data</div>
<svg class="a" style="left:2640px;top:82px;" width="70" height="60" viewBox="0 0 70 60">
      <defs>
        <linearGradient id="cpa" x1="0" y1="0" x2="0" y2="1"><stop offset="0" stop-color="#18a0f0"/><stop offset="0.45" stop-color="#3aa898"/><stop offset="0.72" stop-color="#90bb40"/><stop offset="1" stop-color="#f0c800"/></linearGradient>
        <linearGradient id="cpb" x1="0" y1="0" x2="0" y2="1"><stop offset="0" stop-color="#a850e8"/><stop offset="0.5" stop-color="#f05a88"/><stop offset="0.8" stop-color="#f88070"/><stop offset="1" stop-color="#f8a058"/></linearGradient>
      </defs>
      <path d="M18.3 43 L35.5 42.5 L30.4 55.9 H27 Q23.5 55.9 22 50 Z" fill="#e2552a"/>
      <path d="M38 3.9 H45 Q49 3.9 51 9 L54 16.8 L34 17.3 Z" fill="#1a4ed0"/>
      <path d="M20 3.9 H40.5 L34 17.3 L25 42.5 H10 Q4.5 42.5 5.5 36.5 L14 9 Q15.5 3.9 20 3.9 Z" fill="url(#cpa)"/>
      <path d="M42.5 17.3 H59 Q65.5 17.3 64.5 24 L56 50 Q54 55.9 49 55.9 H30.4 L35.5 42.5 Z" fill="url(#cpb)"/>
    </svg>
<div class="a t" style="top:154.38px;font-size:22px;line-height:22px;color:#111;letter-spacing:0.2px;left:1675px;width:2000px;text-align:center;">Copilot</div>
<div class="a t" style="top:74.28px;font-size:80px;line-height:80px;color:#253f8e;font-weight:700;left:2764px;">f</div>
<svg class="a" style="left:2792px;top:87px;" width="26" height="30" viewBox="0 0 26 30"><path d="M4 3 L20 27 M20 3 L4 27" stroke="#e2581b" stroke-width="5.5"/></svg>
<svg class="a" style="left:2814px;top:80px;" width="18" height="44" viewBox="0 0 18 44"><path d="M3 4 H12 V40 H3" fill="none" stroke="#e2581b" stroke-width="4.6"/></svg>
<div class="a t" style="top:154.38px;font-size:22px;line-height:22px;color:#111;letter-spacing:0.2px;left:1798px;width:2000px;text-align:center;">Fontics</div>
<div class="a" style="left:0px;top:216px;width:2924px;height:52px;background:#ffffff;"></div>
<div class="a" style="left:0px;top:266px;width:159px;height:2px;background:#c8c8c8;"></div>
<div class="a" style="left:157px;top:216px;width:2px;height:52px;background:#c8c8c8;"></div>
<div class="a t" style="top:230.18px;font-size:24px;line-height:24px;color:#111;-webkit-text-stroke:0.2px #111;left:11px;">K39</div>
<svg class="a" style="left:141px;top:222px;" width="18" height="38" viewBox="0 0 18 38"><path d="M2.5 12.5 L9 2 L15.5 12.5 Z M2.5 25 L9 36 L15.5 25 Z" fill="#666"/></svg>
<svg class="a" style="left:186px;top:230px;" width="30" height="30" viewBox="0 0 30 30"><path d="M5 5 L25 25 M25 5 L5 25" stroke="#d2d2d2" stroke-width="4" stroke-linecap="round"/></svg>
<svg class="a" style="left:243px;top:230px;" width="34" height="30" viewBox="0 0 34 30"><path d="M4 15 L13 24 L30 6" fill="none" stroke="#d2d2d2" stroke-width="4" stroke-linecap="round" stroke-linejoin="round"/></svg>
<div class="a t" style="top:221.68px;font-size:37px;line-height:37px;color:#333;font-family:'Liberation Serif', serif;left:303px;font-style:italic;">fx</div>
<div class="a" style="left:351px;top:223px;width:2533px;height:40px;background:#fcfcfc;border:1px solid #dadada;border-right:none;border-radius:6px 0 0 6px;box-sizing:border-box;"></div>
<div class="a t" style="top:230.34px;font-size:25px;line-height:25px;color:#111;left:367px;">0</div>
<div class="a" style="left:2883px;top:223px;width:41px;height:40px;background:#ffffff;border:1px solid #dadada;border-right:none;border-radius:6px 0 0 6px;box-sizing:border-box;"></div>
<svg class="a" style="left:2897px;top:236px;" width="18" height="14" viewBox="0 0 18 14"><path d="M2 2 H16 L9 13 Z" fill="#555"/></svg>
<div class="a" style="left:0px;top:268px;width:2924px;height:2px;background:#c8c8c8;"></div>
<div class="a" style="left:0px;top:270px;width:2924px;height:2px;background:#f4f4f4;"></div>
<div class="a" style="left:0px;top:272px;width:2924px;height:2px;background:#bdbdbd;"></div>
<div class="a" style="left:0px;top:1680px;width:2367px;height:54px;background:#f0f0f0;"></div>
<div class="a" style="left:0px;top:1680px;width:2367px;height:2px;background:#cdcdcd;"></div>
<div class="a" style="left:0px;top:1732px;width:2367px;height:2px;background:#a5a5a5;"></div>
<svg class="a" style="left:18px;top:1696px;" width="20" height="22" viewBox="0 0 20 22"><path d="M17 2 V20 L3 11 Z" fill="#c4c4c4"/></svg>
<svg class="a" style="left:64px;top:1696px;" width="20" height="22" viewBox="0 0 20 22"><path d="M3 2 V20 L17 11 Z" fill="#555"/></svg>
<div class="a" style="left:111px;top:1680px;width:158px;height:46px;background:#ffffff;border:2px solid #c9c9c9;border-top:none;border-radius:0 0 7px 7px;box-sizing:border-box;box-shadow:0 1px 1px #bdbdbd;"></div>
<div class="a t" style="top:1694.53px;font-size:23px;line-height:23px;color:#1d8548;font-weight:700;left:-810px;width:2000px;text-align:center;">LBO</div>
<div class="a t" style="top:1693.18px;font-size:24px;line-height:24px;color:#555;-webkit-text-stroke:0.25px #555;left:-610px;width:2000px;text-align:center;">f_Scenario_V3d</div>
<div class="a t" style="top:1693.18px;font-size:24px;line-height:24px;color:#555;-webkit-text-stroke:0.25px #555;left:-363px;width:2000px;text-align:center;">f_Scenario_B5h</div>
<div class="a t" style="top:1693.18px;font-size:24px;line-height:24px;color:#555;-webkit-text-stroke:0.25px #555;left:-155px;width:2000px;text-align:center;">f_Fit_J4p</div>
<div class="a t" style="top:1693.18px;font-size:24px;line-height:24px;color:#555;-webkit-text-stroke:0.25px #555;left:44px;width:2000px;text-align:center;">f_What If_W6a</div>
<div class="a t" style="top:1693.18px;font-size:24px;line-height:24px;color:#555;-webkit-text-stroke:0.25px #555;left:276px;width:2000px;text-align:center;">f_Scenario_I5t</div>
<div class="a t" style="top:1693.18px;font-size:24px;line-height:24px;color:#555;-webkit-text-stroke:0.25px #555;left:514px;width:2000px;text-align:center;">f_Scenario_K3q</div>
<div class="a t" style="top:1693.18px;font-size:24px;line-height:24px;color:#555;-webkit-text-stroke:0.25px #555;left:751px;width:2000px;text-align:center;">f_Normal_E5d</div>
<div class="a t" style="top:1693.18px;font-size:24px;line-height:24px;color:#555;-webkit-text-stroke:0.25px #555;left:977px;width:2000px;text-align:center;">f_What If_P5s</div>
<div class="a" style="left:514px;top:1682px;width:2px;height:41px;background:#cfcfcf;"></div>
<div class="a" style="left:760px;top:1682px;width:2px;height:41px;background:#cfcfcf;"></div>
<div class="a" style="left:928px;top:1682px;width:2px;height:41px;background:#cfcfcf;"></div>
<div class="a" style="left:1160px;top:1682px;width:2px;height:41px;background:#cfcfcf;"></div>
<div class="a" style="left:1390px;top:1682px;width:2px;height:41px;background:#cfcfcf;"></div>
<div class="a" style="left:1637px;top:1682px;width:2px;height:41px;background:#cfcfcf;"></div>
<div class="a" style="left:1864px;top:1682px;width:2px;height:41px;background:#cfcfcf;"></div>
<div class="a" style="left:2088px;top:1682px;width:2px;height:41px;background:#cfcfcf;"></div>
<div class="a" style="left:2229px;top:1682px;width:2px;height:41px;background:#cfcfcf;"></div>
<div class="a" style="left:2304px;top:1682px;width:2px;height:41px;background:#cfcfcf;"></div>
<div class="a t" style="top:1693.18px;font-size:24px;line-height:24px;color:#555;left:2123px;-webkit-mask-image:linear-gradient(90deg,#000 40%,transparent 100%);">f_What If</div>
<svg class="a" style="left:2258px;top:1694px;" width="22" height="22" viewBox="0 0 22 22"><path d="M11 1 V21 M1 11 H21" stroke="#5a5a5a" stroke-width="4"/></svg>
<div class="a" style="left:0px;top:274px;width:2367px;height:1406px;background:#ffffff;"></div>
<div class="a" style="left:0px;top:274px;width:2367px;height:57px;background:linear-gradient(#fbfbfb,#f4f4f4);"></div>
<div class="a" style="left:1741px;top:274px;width:176px;height:57px;background:#efefef;"></div>
<div class="a" style="left:0px;top:331px;width:57px;height:1349px;background:linear-gradient(90deg,#fafafa,#f3f3f3);"></div>
<svg class="a" style="left:8px;top:283px;" width="45" height="43" viewBox="0 0 45 43"><path d="M44 0 L44 43 L0 43 Z" fill="#d9d9d9"/></svg>
<div class="a" style="left:100px;top:274px;width:2px;height:57px;background:#dcdcdc;"></div>
<div class="a" style="left:332px;top:274px;width:2px;height:57px;background:#dcdcdc;"></div>
<div class="a" style="left:508px;top:274px;width:2px;height:57px;background:#dcdcdc;"></div>
<div class="a" style="left:684px;top:274px;width:2px;height:57px;background:#dcdcdc;"></div>
<div class="a" style="left:860px;top:274px;width:2px;height:57px;background:#dcdcdc;"></div>
<div class="a" style="left:1036px;top:274px;width:2px;height:57px;background:#dcdcdc;"></div>
<div class="a" style="left:1212px;top:274px;width:2px;height:57px;background:#dcdcdc;"></div>
<div class="a" style="left:1388px;top:274px;width:2px;height:57px;background:#dcdcdc;"></div>
<div class="a" style="left:1564px;top:274px;width:2px;height:57px;background:#dcdcdc;"></div>
<div class="a" style="left:1740px;top:274px;width:2px;height:57px;background:#dcdcdc;"></div>
<div class="a" style="left:1916px;top:274px;width:2px;height:57px;background:#dcdcdc;"></div>
<div class="a" style="left:2092px;top:274px;width:2px;height:57px;background:#dcdcdc;"></div>
<div class="a" style="left:2268px;top:274px;width:2px;height:57px;background:#dcdcdc;"></div>
<div class="a" style="left:0px;top:329px;width:2367px;height:2px;background:#c4c4c4;"></div>
<div class="a" style="left:56px;top:274px;width:2px;height:1406px;background:#c4c4c4;"></div>
<div class="a" style="left:1741px;top:327px;width:176px;height:4px;background:#1e7145;"></div>
<div class="a t" style="top:288.72px;font-size:27.5px;line-height:27.5px;color:#555;left:-920.5px;width:2000px;text-align:center;">A</div>
<div class="a t" style="top:288.72px;font-size:27.5px;line-height:27.5px;color:#555;left:-783.0px;width:2000px;text-align:center;">B</div>
<div class="a t" style="top:288.72px;font-size:27.5px;line-height:27.5px;color:#555;left:-579.0px;width:2000px;text-align:center;">C</div>
<div class="a t" style="top:288.72px;font-size:27.5px;line-height:27.5px;color:#555;left:-403.0px;width:2000px;text-align:center;">D</div>
<div class="a t" style="top:288.72px;font-size:27.5px;line-height:27.5px;color:#555;left:-227.0px;width:2000px;text-align:center;">E</div>
<div class="a t" style="top:288.72px;font-size:27.5px;line-height:27.5px;color:#555;left:-51.0px;width:2000px;text-align:center;">F</div>
<div class="a t" style="top:288.72px;font-size:27.5px;line-height:27.5px;color:#555;left:125.0px;width:2000px;text-align:center;">G</div>
<div class="a t" style="top:288.72px;font-size:27.5px;line-height:27.5px;color:#555;left:301.0px;width:2000px;text-align:center;">H</div>
<div class="a t" style="top:288.72px;font-size:27.5px;line-height:27.5px;color:#555;left:477.0px;width:2000px;text-align:center;">I</div>
<div class="a t" style="top:288.72px;font-size:27.5px;line-height:27.5px;color:#555;left:653.0px;width:2000px;text-align:center;">J</div>
<div class="a t" style="top:288.72px;font-size:27.5px;line-height:27.5px;color:#1e7145;left:829.0px;width:2000px;text-align:center;">K</div>
<div class="a t" style="top:288.72px;font-size:27.5px;line-height:27.5px;color:#555;left:1005.0px;width:2000px;text-align:center;">L</div>
<div class="a t" style="top:288.72px;font-size:27.5px;line-height:27.5px;color:#555;left:1181.0px;width:2000px;text-align:center;">M</div>
<div class="a t" style="top:288.72px;font-size:27.5px;line-height:27.5px;color:#555;left:368px;width:2000px;text-align:right;">N</div>
<div class="a" style="left:0px;top:382px;width:56px;height:2px;background:#e0e0e0;"></div>
<div class="a" style="left:0px;top:434px;width:56px;height:2px;background:#e0e0e0;"></div>
<div class="a" style="left:0px;top:486px;width:56px;height:2px;background:#e0e0e0;"></div>
<div class="a" style="left:0px;top:506px;width:56px;height:2px;background:#e0e0e0;"></div>
<div class="a" style="left:0px;top:558px;width:56px;height:2px;background:#e0e0e0;"></div>
<div class="a" style="left:0px;top:610px;width:56px;height:2px;background:#e0e0e0;"></div>
<div class="a" style="left:0px;top:662px;width:56px;height:2px;background:#e0e0e0;"></div>
<div class="a" style="left:0px;top:714px;width:56px;height:2px;background:#e0e0e0;"></div>
<div class="a" style="left:0px;top:766px;width:56px;height:2px;background:#e0e0e0;"></div>
<div class="a" style="left:0px;top:786px;width:56px;height:2px;background:#e0e0e0;"></div>
<div class="a" style="left:0px;top:838px;width:56px;height:2px;background:#e0e0e0;"></div>
<div class="a" style="left:0px;top:890px;width:56px;height:2px;background:#e0e0e0;"></div>
<div class="a" style="left:0px;top:942px;width:56px;height:2px;background:#e0e0e0;"></div>
<div class="a" style="left:0px;top:994px;width:56px;height:2px;background:#e0e0e0;"></div>
<div class="a" style="left:0px;top:1046px;width:56px;height:2px;background:#e0e0e0;"></div>
<div class="a" style="left:0px;top:1098px;width:56px;height:2px;background:#e0e0e0;"></div>
<div class="a" style="left:0px;top:1150px;width:56px;height:2px;background:#e0e0e0;"></div>
<div class="a" style="left:0px;top:1202px;width:56px;height:2px;background:#e0e0e0;"></div>
<div class="a" style="left:0px;top:1254px;width:56px;height:2px;background:#e0e0e0;"></div>
<div class="a" style="left:0px;top:1306px;width:56px;height:2px;background:#e0e0e0;"></div>
<div class="a" style="left:0px;top:1326px;width:56px;height:2px;background:#e0e0e0;"></div>
<div class="a" style="left:0px;top:1378px;width:56px;height:2px;background:#e0e0e0;"></div>
<div class="a" style="left:0px;top:1430px;width:56px;height:2px;background:#e0e0e0;"></div>
<div class="a" style="left:0px;top:1482px;width:56px;height:2px;background:#e0e0e0;"></div>
<div class="a" style="left:0px;top:1534px;width:56px;height:2px;background:#e0e0e0;"></div>
<div class="a" style="left:0px;top:1586px;width:56px;height:2px;background:#e0e0e0;"></div>
<div class="a" style="left:0px;top:1638px;width:56px;height:2px;background:#e0e0e0;"></div>
<div class="a" style="left:0px;top:1200px;width:58px;height:5px;background:#1e7145;"></div>
<div class="a" style="left:0px;top:1252px;width:58px;height:5px;background:#1e7145;"></div>
<div class="a" style="left:0;top:331px;width:56px;height:52px;overflow:hidden"><div class="a t" style="left:-976.5px;width:2000px;text-align:center;top:20.87px;font-size:28.5px;line-height:28.5px;color:#555">1</div></div>
<div class="a" style="left:0;top:383px;width:56px;height:52px;overflow:hidden"><div class="a t" style="left:-976.5px;width:2000px;text-align:center;top:20.87px;font-size:28.5px;line-height:28.5px;color:#555">2</div></div>
<div class="a" style="left:0;top:435px;width:56px;height:52px;overflow:hidden"><div class="a t" style="left:-976.5px;width:2000px;text-align:center;top:20.87px;font-size:28.5px;line-height:28.5px;color:#555">3</div></div>
<div class="a" style="left:0;top:487px;width:56px;height:20px;overflow:hidden"><div class="a t" style="left:-976.5px;width:2000px;text-align:center;top:-13.13px;font-size:28.5px;line-height:28.5px;color:#555">4</div></div>
<div class="a" style="left:0;top:507px;width:56px;height:52px;overflow:hidden"><div class="a t" style="left:-976.5px;width:2000px;text-align:center;top:20.87px;font-size:28.5px;line-height:28.5px;color:#555">5</div></div>
<div class="a" style="left:0;top:559px;width:56px;height:52px;overflow:hidden"><div class="a t" style="left:-976.5px;width:2000px;text-align:center;top:20.87px;font-size:28.5px;line-height:28.5px;color:#555">6</div></div>
<div class="a" style="left:0;top:611px;width:56px;height:52px;overflow:hidden"><div class="a t" style="left:-976.5px;width:2000px;text-align:center;top:20.87px;font-size:28.5px;line-height:28.5px;color:#555">7</div></div>
<div class="a" style="left:0;top:663px;width:56px;height:52px;overflow:hidden"><div class="a t" style="left:-976.5px;width:2000px;text-align:center;top:20.87px;font-size:28.5px;line-height:28.5px;color:#555">8</div></div>
<div class="a" style="left:0;top:715px;width:56px;height:52px;overflow:hidden"><div class="a t" style="left:-976.5px;width:2000px;text-align:center;top:20.87px;font-size:28.5px;line-height:28.5px;color:#555">9</div></div>
<div class="a" style="left:0;top:767px;width:56px;height:20px;overflow:hidden"><div class="a t" style="left:-976.5px;width:2000px;text-align:center;top:-13.13px;font-size:28.5px;line-height:28.5px;color:#555">10</div></div>
<div class="a" style="left:0;top:787px;width:56px;height:52px;overflow:hidden"><div class="a t" style="left:-976.5px;width:2000px;text-align:center;top:20.87px;font-size:28.5px;line-height:28.5px;color:#555">11</div></div>
<div class="a" style="left:0;top:839px;width:56px;height:52px;overflow:hidden"><div class="a t" style="left:-976.5px;width:2000px;text-align:center;top:20.87px;font-size:28.5px;line-height:28.5px;color:#555">12</div></div>
<div class="a" style="left:0;top:891px;width:56px;height:52px;overflow:hidden"><div class="a t" style="left:-976.5px;width:2000px;text-align:center;top:20.87px;font-size:28.5px;line-height:28.5px;color:#555">13</div></div>
<div class="a" style="left:0;top:943px;width:56px;height:52px;overflow:hidden"><div class="a t" style="left:-976.5px;width:2000px;text-align:center;top:20.87px;font-size:28.5px;line-height:28.5px;color:#555">14</div></div>
<div class="a" style="left:0;top:995px;width:56px;height:52px;overflow:hidden"><div class="a t" style="left:-976.5px;width:2000px;text-align:center;top:20.87px;font-size:28.5px;line-height:28.5px;color:#555">15</div></div>
<div class="a" style="left:0;top:1047px;width:56px;height:52px;overflow:hidden"><div class="a t" style="left:-976.5px;width:2000px;text-align:center;top:20.87px;font-size:28.5px;line-height:28.5px;color:#555">16</div></div>
<div class="a" style="left:0;top:1099px;width:56px;height:52px;overflow:hidden"><div class="a t" style="left:-976.5px;width:2000px;text-align:center;top:20.87px;font-size:28.5px;line-height:28.5px;color:#555">17</div></div>
<div class="a" style="left:0;top:1151px;width:56px;height:52px;overflow:hidden"><div class="a t" style="left:-976.5px;width:2000px;text-align:center;top:20.87px;font-size:28.5px;line-height:28.5px;color:#555">18</div></div>
<div class="a" style="left:0;top:1203px;width:56px;height:52px;overflow:hidden"><div class="a t" style="left:-976.5px;width:2000px;text-align:center;top:20.87px;font-size:28.5px;line-height:28.5px;color:#555">20</div></div>
<div class="a" style="left:0;top:1255px;width:56px;height:52px;overflow:hidden"><div class="a t" style="left:-976.5px;width:2000px;text-align:center;top:20.87px;font-size:28.5px;line-height:28.5px;color:#555">22</div></div>
<div class="a" style="left:0;top:1307px;width:56px;height:20px;overflow:hidden"><div class="a t" style="left:-976.5px;width:2000px;text-align:center;top:-13.13px;font-size:28.5px;line-height:28.5px;color:#555">23</div></div>
<div class="a" style="left:0;top:1327px;width:56px;height:52px;overflow:hidden"><div class="a t" style="left:-976.5px;width:2000px;text-align:center;top:20.87px;font-size:28.5px;line-height:28.5px;color:#555">24</div></div>
<div class="a" style="left:0;top:1379px;width:56px;height:52px;overflow:hidden"><div class="a t" style="left:-976.5px;width:2000px;text-align:center;top:20.87px;font-size:28.5px;line-height:28.5px;color:#555">25</div></div>
<div class="a" style="left:0;top:1431px;width:56px;height:52px;overflow:hidden"><div class="a t" style="left:-976.5px;width:2000px;text-align:center;top:20.87px;font-size:28.5px;line-height:28.5px;color:#555">26</div></div>
<div class="a" style="left:0;top:1483px;width:56px;height:52px;overflow:hidden"><div class="a t" style="left:-976.5px;width:2000px;text-align:center;top:20.87px;font-size:28.5px;line-height:28.5px;color:#555">27</div></div>
<div class="a" style="left:0;top:1535px;width:56px;height:52px;overflow:hidden"><div class="a t" style="left:-976.5px;width:2000px;text-align:center;top:20.87px;font-size:28.5px;line-height:28.5px;color:#555">28</div></div>
<div class="a" style="left:0;top:1587px;width:56px;height:52px;overflow:hidden"><div class="a t" style="left:-976.5px;width:2000px;text-align:center;top:20.87px;font-size:28.5px;line-height:28.5px;color:#555">29</div></div>
<div class="a" style="left:0;top:1639px;width:56px;height:41px;overflow:hidden"><div class="a t" style="left:-976.5px;width:2000px;text-align:center;top:20.87px;font-size:28.5px;line-height:28.5px;color:#555">30</div></div>
<div class="a t" style="top:343.53px;font-size:36px;line-height:36px;color:#000;font-weight:700;left:89px;">Input Sheet</div>
<div class="a" style="left:58px;top:382px;width:2309px;height:2px;background:#000;"></div>
<div class="a t" style="top:450.91px;font-size:32px;line-height:32px;color:#000;font-weight:700;left:109px;">Cost of Deal</div>
<div class="a" style="left:101px;top:486px;width:2266px;height:2px;background:#000;"></div>
<div class="a t" style="top:529.99px;font-size:26px;line-height:26px;color:#000;left:131px;">Price per share</div>
<div class="a t" style="top:581.99px;font-size:26px;line-height:26px;color:#000;left:131px;"># shares outstanding ('m)</div>
<div class="a t" style="top:633.99px;font-size:26px;line-height:26px;color:#000;left:131px;">Total cost of deal ('m)</div>
<div class="a" style="left:509px;top:507px;width:176px;height:52px;background:#d1c4e9;"></div>
<div class="a" style="left:509px;top:559px;width:176px;height:52px;background:#d7ccc8;"></div>
<div class="a" style="left:509px;top:611px;width:176px;height:52px;background:#d1c4e9;"></div>
<div class="a" style="left:508px;top:506px;width:178px;height:2px;background:#000;"></div>
<div class="a" style="left:508px;top:558px;width:178px;height:2px;background:#000;"></div>
<div class="a" style="left:508px;top:610px;width:178px;height:2px;background:#000;"></div>
<div class="a" style="left:508px;top:662px;width:178px;height:2px;background:#000;"></div>
<div class="a" style="left:508px;top:506px;width:2px;height:158px;background:#000;"></div>
<div class="a" style="left:684px;top:506px;width:2px;height:158px;background:#000;"></div>
<div class="a t" style="top:529.99px;font-size:26px;line-height:26px;color:#000;font-weight:700;left:-403.0px;width:2000px;text-align:center;">201</div>
<div class="a t" style="top:581.99px;font-size:26px;line-height:26px;color:#000;font-weight:700;left:-403.0px;width:2000px;text-align:center;">22</div>
<div class="a t" style="top:633.99px;font-size:26px;line-height:26px;color:#000;font-weight:700;left:-403.0px;width:2000px;text-align:center;">6212</div>
<div class="a t" style="top:529.99px;font-size:26px;line-height:26px;color:#000;left:866px;">Debt outstanding ('m)</div>
<div class="a t" style="top:581.99px;font-size:26px;line-height:26px;color:#000;left:866px;">Other costs ('m)</div>
<div class="a" style="left:1389px;top:507px;width:176px;height:104px;background:#d7ccc8;"></div>
<div class="a" style="left:1388px;top:506px;width:178px;height:2px;background:#000;"></div>
<div class="a" style="left:1388px;top:558px;width:178px;height:2px;background:#000;"></div>
<div class="a" style="left:1388px;top:610px;width:178px;height:2px;background:#000;"></div>
<div class="a" style="left:1388px;top:506px;width:2px;height:106px;background:#000;"></div>
<div class="a" style="left:1564px;top:506px;width:2px;height:106px;background:#000;"></div>
<div class="a t" style="top:529.99px;font-size:26px;line-height:26px;color:#000;font-weight:700;left:477.0px;width:2000px;text-align:center;">1800</div>
<div class="a t" style="top:581.99px;font-size:26px;line-height:26px;color:#000;font-weight:700;left:477.0px;width:2000px;text-align:center;">10</div>
<div class="a t" style="top:730.91px;font-size:32px;line-height:32px;color:#000;font-weight:700;left:108px;">Sources of Funds</div>
<div class="a" style="left:101px;top:766px;width:2266px;height:2px;background:#000;"></div>
<div class="a t" style="top:809.99px;font-size:26px;line-height:26px;color:#808080;left:131px;">Capital repayment (% of principal)</div>
<div class="a t" style="top:861.49px;font-size:26px;line-height:26px;color:#000;font-weight:700;left:131px;">Source</div>
<div class="a t" style="top:861.49px;font-size:26px;line-height:26px;color:#808080;left:-579.0px;width:2000px;text-align:center;">Amount</div>
<div class="a t" style="top:861.49px;font-size:26px;line-height:26px;color:#808080;left:-403.0px;width:2000px;text-align:center;">Int. rate</div>
<div class="a" style="left:685px;top:839px;width:1682px;height:52px;background:#d7ccc8;"></div>
<div class="a t" style="top:861.49px;font-size:26px;line-height:26px;color:#808080;font-weight:700;left:-227.0px;width:2000px;text-align:center;">1</div>
<div class="a t" style="top:861.49px;font-size:26px;line-height:26px;color:#808080;font-weight:700;left:-51.0px;width:2000px;text-align:center;">2</div>
<div class="a t" style="top:861.49px;font-size:26px;line-height:26px;color:#808080;font-weight:700;left:125.0px;width:2000px;text-align:center;">3</div>
<div class="a t" style="top:861.49px;font-size:26px;line-height:26px;color:#808080;font-weight:700;left:301.0px;width:2000px;text-align:center;">4</div>
<div class="a t" style="top:861.49px;font-size:26px;line-height:26px;color:#808080;font-weight:700;left:477.0px;width:2000px;text-align:center;">5</div>
<div class="a t" style="top:861.49px;font-size:26px;line-height:26px;color:#808080;font-weight:700;left:653.0px;width:2000px;text-align:center;">6</div>
<div class="a t" style="top:861.49px;font-size:26px;line-height:26px;color:#808080;font-weight:700;left:829.0px;width:2000px;text-align:center;">7</div>
<div class="a t" style="top:861.49px;font-size:26px;line-height:26px;color:#808080;font-weight:700;left:1005.0px;width:2000px;text-align:center;">8</div>
<div class="a t" style="top:861.49px;font-size:26px;line-height:26px;color:#808080;font-weight:700;left:1181.0px;width:2000px;text-align:center;">9</div>
<div class="a t" style="top:861.49px;font-size:26px;line-height:26px;color:#808080;font-weight:700;left:1357.0px;width:2000px;text-align:center;">10</div>
<div class="a" style="left:333px;top:891px;width:176px;height:52px;background:#b3e5fc;"></div>
<div class="a" style="left:333px;top:943px;width:176px;height:52px;background:#d7ccc8;"></div>
<div class="a" style="left:509px;top:943px;width:176px;height:52px;background:#d7ccc8;"></div>
<div class="a" style="left:333px;top:995px;width:176px;height:52px;background:#b3e5fc;"></div>
<div class="a" style="left:509px;top:995px;width:176px;height:52px;background:#b3e5fc;"></div>
<div class="a" style="left:685px;top:995px;width:176px;height:52px;background:#d7ccc8;"></div>
<div class="a" style="left:861px;top:995px;width:176px;height:52px;background:#d7ccc8;"></div>
<div class="a" style="left:1037px;top:995px;width:176px;height:52px;background:#d7ccc8;"></div>
<div class="a" style="left:1213px;top:995px;width:176px;height:52px;background:#d7ccc8;"></div>
<div class="a" style="left:1389px;top:995px;width:176px;height:52px;background:#d7ccc8;"></div>
<div class="a" style="left:1565px;top:995px;width:176px;height:52px;background:#d7ccc8;"></div>
<div class="a" style="left:1741px;top:995px;width:176px;height:52px;background:#d7ccc8;"></div>
<div class="a" style="left:1917px;top:995px;width:176px;height:52px;background:#d7ccc8;"></div>
<div class="a" style="left:2093px;top:995px;width:176px;height:52px;background:#d7ccc8;"></div>
<div class="a" style="left:2269px;top:995px;width:98px;height:52px;background:#d7ccc8;"></div>
<div class="a" style="left:333px;top:1047px;width:176px;height:52px;background:#b3e5fc;"></div>
<div class="a" style="left:509px;top:1047px;width:176px;height:52px;background:#b3e5fc;"></div>
<div class="a" style="left:685px;top:1047px;width:176px;height:52px;background:#d7ccc8;"></div>
<div class="a" style="left:861px;top:1047px;width:176px;height:52px;background:#d7ccc8;"></div>
<div class="a" style="left:1037px;top:1047px;width:176px;height:52px;background:#d7ccc8;"></div>
<div class="a" style="left:1213px;top:1047px;width:176px;height:52px;background:#d7ccc8;"></div>
<div class="a" style="left:1389px;top:1047px;width:176px;height:52px;background:#d7ccc8;"></div>
<div class="a" style="left:1565px;top:1047px;width:176px;height:52px;background:#d7ccc8;"></div>
<div class="a" style="left:1741px;top:1047px;width:176px;height:52px;background:#d7ccc8;"></div>
<div class="a" style="left:1917px;top:1047px;width:176px;height:52px;background:#d7ccc8;"></div>
<div class="a" style="left:2093px;top:1047px;width:176px;height:52px;background:#d7ccc8;"></div>
<div class="a" style="left:2269px;top:1047px;width:98px;height:52px;background:#d7ccc8;"></div>
<div class="a" style="left:333px;top:1099px;width:176px;height:52px;background:#d7ccc8;"></div>
<div class="a" style="left:509px;top:1099px;width:176px;height:52px;background:#d7ccc8;"></div>
<div class="a" style="left:333px;top:1151px;width:176px;height:52px;background:#d7ccc8;"></div>
<div class="a" style="left:509px;top:1151px;width:176px;height:52px;background:#d7ccc8;"></div>
<div class="a t" style="top:913.99px;font-size:26px;line-height:26px;color:#000;left:131px;">Equity</div>
<div class="a t" style="top:913.99px;font-size:26px;line-height:26px;color:#000;left:-579.0px;width:2000px;text-align:center;">1000</div>
<div class="a t" style="top:965.99px;font-size:26px;line-height:26px;color:#000;left:131px;">Pfd. Stock</div>
<div class="a t" style="top:965.99px;font-size:26px;line-height:26px;color:#000;left:-579.0px;width:2000px;text-align:center;">0</div>
<div class="a t" style="top:965.99px;font-size:26px;line-height:26px;color:#000;left:-403.0px;width:2000px;text-align:center;">0.00%</div>
<div class="a t" style="top:1017.99px;font-size:26px;line-height:26px;color:#000;left:131px;">Debt: Senior</div>
<div class="a t" style="top:1017.99px;font-size:26px;line-height:26px;color:#000;left:-579.0px;width:2000px;text-align:center;">1733</div>
<div class="a t" style="top:1017.99px;font-size:26px;line-height:26px;color:#000;left:-403.0px;width:2000px;text-align:center;">10.00%</div>
<div class="a t" style="top:1069.99px;font-size:26px;line-height:26px;color:#000;left:131px;">Debt: Mezz</div>
<div class="a t" style="top:1069.99px;font-size:26px;line-height:26px;color:#000;left:-579.0px;width:2000px;text-align:center;">3468</div>
<div class="a t" style="top:1069.99px;font-size:26px;line-height:26px;color:#000;left:-403.0px;width:2000px;text-align:center;">15.00%</div>
<div class="a t" style="top:1121.99px;font-size:26px;line-height:26px;color:#000;left:131px;">Debt: Type 3</div>
<div class="a t" style="top:1121.99px;font-size:26px;line-height:26px;color:#000;left:-579.0px;width:2000px;text-align:center;">0</div>
<div class="a t" style="top:1121.99px;font-size:26px;line-height:26px;color:#000;left:-403.0px;width:2000px;text-align:center;">0.00%</div>
<div class="a t" style="top:1173.99px;font-size:26px;line-height:26px;color:#000;left:131px;">Debt: Type 4</div>
<div class="a t" style="top:1173.99px;font-size:26px;line-height:26px;color:#000;left:-579.0px;width:2000px;text-align:center;">0</div>
<div class="a t" style="top:1173.99px;font-size:26px;line-height:26px;color:#000;left:-403.0px;width:2000px;text-align:center;">0.00%</div>
<div class="a t" style="top:1017.99px;font-size:26px;line-height:26px;color:#000;left:-227.0px;width:2000px;text-align:center;">0.00%</div>
<div class="a t" style="top:1069.99px;font-size:26px;line-height:26px;color:#000;left:-227.0px;width:2000px;text-align:center;">0.00%</div>
<div class="a t" style="top:1017.99px;font-size:26px;line-height:26px;color:#000;left:-51.0px;width:2000px;text-align:center;">0.00%</div>
<div class="a t" style="top:1069.99px;font-size:26px;line-height:26px;color:#000;left:-51.0px;width:2000px;text-align:center;">0.00%</div>
<div class="a t" style="top:1017.99px;font-size:26px;line-height:26px;color:#000;left:125.0px;width:2000px;text-align:center;">0.00%</div>
<div class="a t" style="top:1069.99px;font-size:26px;line-height:26px;color:#000;left:125.0px;width:2000px;text-align:center;">0.00%</div>
<div class="a t" style="top:1017.99px;font-size:26px;line-height:26px;color:#000;left:301.0px;width:2000px;text-align:center;">0.00%</div>
<div class="a t" style="top:1069.99px;font-size:26px;line-height:26px;color:#000;left:301.0px;width:2000px;text-align:center;">10.00%</div>
<div class="a t" style="top:1017.99px;font-size:26px;line-height:26px;color:#000;left:477.0px;width:2000px;text-align:center;">0.00%</div>
<div class="a t" style="top:1069.99px;font-size:26px;line-height:26px;color:#000;left:477.0px;width:2000px;text-align:center;">10.00%</div>
<div class="a t" style="top:1017.99px;font-size:26px;line-height:26px;color:#000;left:653.0px;width:2000px;text-align:center;">0.00%</div>
<div class="a t" style="top:1069.99px;font-size:26px;line-height:26px;color:#000;left:653.0px;width:2000px;text-align:center;">10.00%</div>
<div class="a t" style="top:1017.99px;font-size:26px;line-height:26px;color:#000;left:829.0px;width:2000px;text-align:center;">0.00%</div>
<div class="a t" style="top:1069.99px;font-size:26px;line-height:26px;color:#000;left:829.0px;width:2000px;text-align:center;">10.00%</div>
<div class="a t" style="top:1017.99px;font-size:26px;line-height:26px;color:#000;left:1005.0px;width:2000px;text-align:center;">0.00%</div>
<div class="a t" style="top:1069.99px;font-size:26px;line-height:26px;color:#000;left:1005.0px;width:2000px;text-align:center;">20.00%</div>
<div class="a t" style="top:1017.99px;font-size:26px;line-height:26px;color:#000;left:1181.0px;width:2000px;text-align:center;">0.00%</div>
<div class="a t" style="top:1069.99px;font-size:26px;line-height:26px;color:#000;left:1181.0px;width:2000px;text-align:center;">20.00%</div>
<div class="a t" style="top:1017.99px;font-size:26px;line-height:26px;color:#000;left:1357.0px;width:2000px;text-align:center;">0.00%</div>
<div class="a t" style="top:1069.99px;font-size:26px;line-height:26px;color:#000;left:1357.0px;width:2000px;text-align:center;">20.00%</div>
<div class="a" style="left:333px;top:890px;width:2034px;height:2px;background:#000;"></div>
<div class="a" style="left:333px;top:942px;width:2034px;height:2px;background:#000;"></div>
<div class="a" style="left:333px;top:994px;width:2034px;height:2px;background:#000;"></div>
<div class="a" style="left:333px;top:1046px;width:2034px;height:2px;background:#000;"></div>
<div class="a" style="left:333px;top:1098px;width:2034px;height:2px;background:#000;"></div>
<div class="a" style="left:333px;top:1150px;width:2034px;height:2px;background:#000;"></div>
<div class="a" style="left:333px;top:1202px;width:2034px;height:2px;background:#000;"></div>
<div class="a" style="left:332px;top:890px;width:2px;height:314px;background:#000;"></div>
<div class="a" style="left:508px;top:890px;width:2px;height:314px;background:#000;"></div>
<div class="a" style="left:684px;top:890px;width:2px;height:314px;background:#000;"></div>
<div class="a" style="left:860px;top:890px;width:2px;height:314px;background:#000;"></div>
<div class="a" style="left:1036px;top:890px;width:2px;height:314px;background:#000;"></div>
<div class="a" style="left:1212px;top:890px;width:2px;height:314px;background:#000;"></div>
<div class="a" style="left:1388px;top:890px;width:2px;height:314px;background:#000;"></div>
<div class="a" style="left:1564px;top:890px;width:2px;height:314px;background:#000;"></div>
<div class="a" style="left:1740px;top:890px;width:2px;height:314px;background:#000;"></div>
<div class="a" style="left:1916px;top:890px;width:2px;height:314px;background:#000;"></div>
<div class="a" style="left:2092px;top:890px;width:2px;height:314px;background:#000;"></div>
<div class="a" style="left:2268px;top:890px;width:2px;height:314px;background:#000;"></div>
<div class="a" style="left:685px;top:1204px;width:176px;height:51px;background:#ffccbc;"></div>
<svg class="a" style="left:685px;top:1204px;" width="17" height="17" viewBox="0 0 17 17"><path d="M0 0 L16 0 L0 16 Z" fill="#0a7a0a"/></svg>
<div class="a t" style="top:1225.49px;font-size:26px;line-height:26px;color:#000;left:-227.0px;width:2000px;text-align:center;">#DIV/0!</div>
<div class="a" style="left:861px;top:1204px;width:176px;height:51px;background:#ffccbc;"></div>
<svg class="a" style="left:861px;top:1204px;" width="17" height="17" viewBox="0 0 17 17"><path d="M0 0 L16 0 L0 16 Z" fill="#0a7a0a"/></svg>
<div class="a t" style="top:1225.49px;font-size:26px;line-height:26px;color:#000;left:-51.0px;width:2000px;text-align:center;">#DIV/0!</div>
<div class="a t" style="top:1271.41px;font-size:32px;line-height:32px;color:#000;font-weight:700;left:108px;">Forecasts</div>
<div class="a" style="left:101px;top:1306px;width:2266px;height:2px;background:#000;"></div>
<div class="a t" style="top:1349.99px;font-size:26px;line-height:26px;color:#808080;left:131px;">Period</div>
<div class="a" style="left:509px;top:1327px;width:1760px;height:52px;background:#d7ccc8;"></div>
<div class="a t" style="top:1349.99px;font-size:26px;line-height:26px;color:#808080;left:-403.0px;width:2000px;text-align:center;">1</div>
<div class="a t" style="top:1349.99px;font-size:26px;line-height:26px;color:#808080;left:-227.0px;width:2000px;text-align:center;">2</div>
<div class="a t" style="top:1349.99px;font-size:26px;line-height:26px;color:#808080;left:-51.0px;width:2000px;text-align:center;">3</div>
<div class="a t" style="top:1349.99px;font-size:26px;line-height:26px;color:#808080;left:125.0px;width:2000px;text-align:center;">4</div>
<div class="a t" style="top:1349.99px;font-size:26px;line-height:26px;color:#808080;left:301.0px;width:2000px;text-align:center;">5</div>
<div class="a t" style="top:1349.99px;font-size:26px;line-height:26px;color:#808080;left:477.0px;width:2000px;text-align:center;">6</div>
<div class="a t" style="top:1349.99px;font-size:26px;line-height:26px;color:#808080;left:653.0px;width:2000px;text-align:center;">7</div>
<div class="a t" style="top:1349.99px;font-size:26px;line-height:26px;color:#808080;left:829.0px;width:2000px;text-align:center;">8</div>
<div class="a t" style="top:1349.99px;font-size:26px;line-height:26px;color:#808080;left:1005.0px;width:2000px;text-align:center;">9</div>
<div class="a t" style="top:1349.99px;font-size:26px;line-height:26px;color:#808080;left:1181.0px;width:2000px;text-align:center;">10</div>
<div class="a t" style="top:1349.99px;font-size:26px;line-height:26px;color:#000;left:2296px;">After yr 10</div>
<div class="a t" style="top:1401.99px;font-size:26px;line-height:26px;color:#000;left:131px;">Revenues</div>
<div class="a" style="left:509px;top:1379px;width:176px;height:52px;background:#b3e5fc;"></div>
<div class="a t" style="top:1401.99px;font-size:26px;line-height:26px;color:#000;left:-403.0px;width:2000px;text-align:center;">14.0%</div>
<div class="a" style="left:685px;top:1379px;width:176px;height:52px;background:#b3e5fc;"></div>
<div class="a t" style="top:1401.99px;font-size:26px;line-height:26px;color:#000;left:-227.0px;width:2000px;text-align:center;">14.0%</div>
<div class="a" style="left:861px;top:1379px;width:176px;height:52px;background:#b3e5fc;"></div>
<div class="a t" style="top:1401.99px;font-size:26px;line-height:26px;color:#000;left:-51.0px;width:2000px;text-align:center;">14.0%</div>
<div class="a" style="left:1037px;top:1379px;width:176px;height:52px;background:#b3e5fc;"></div>
<div class="a t" style="top:1401.99px;font-size:26px;line-height:26px;color:#000;left:125.0px;width:2000px;text-align:center;">14.0%</div>
<div class="a" style="left:1213px;top:1379px;width:176px;height:52px;background:#b3e5fc;"></div>
<div class="a t" style="top:1401.99px;font-size:26px;line-height:26px;color:#000;left:301.0px;width:2000px;text-align:center;">14.0%</div>
<div class="a" style="left:1389px;top:1379px;width:176px;height:52px;background:#b3e5fc;"></div>
<div class="a t" style="top:1401.99px;font-size:26px;line-height:26px;color:#000;left:477.0px;width:2000px;text-align:center;">8.0%</div>
<div class="a" style="left:1565px;top:1379px;width:176px;height:52px;background:#b3e5fc;"></div>
<div class="a t" style="top:1401.99px;font-size:26px;line-height:26px;color:#000;left:653.0px;width:2000px;text-align:center;">8.0%</div>
<div class="a" style="left:1741px;top:1379px;width:176px;height:52px;background:#b3e5fc;"></div>
<div class="a t" style="top:1401.99px;font-size:26px;line-height:26px;color:#000;left:829.0px;width:2000px;text-align:center;">8.0%</div>
<div class="a" style="left:1917px;top:1379px;width:176px;height:52px;background:#b3e5fc;"></div>
<div class="a t" style="top:1401.99px;font-size:26px;line-height:26px;color:#000;left:1005.0px;width:2000px;text-align:center;">8.0%</div>
<div class="a" style="left:2093px;top:1379px;width:176px;height:52px;background:#b3e5fc;"></div>
<div class="a t" style="top:1401.99px;font-size:26px;line-height:26px;color:#000;left:1181.0px;width:2000px;text-align:center;">8.0%</div>
<div class="a" style="left:2269px;top:1379px;width:98px;height:52px;background:#b3e5fc;"></div>
<div class="a t" style="top:1401.99px;font-size:26px;line-height:26px;color:#000;left:1357.0px;width:2000px;text-align:center;">8.0%</div>
<div class="a t" style="top:1453.99px;font-size:26px;line-height:26px;color:#000;left:131px;">Depreciation</div>
<div class="a" style="left:509px;top:1431px;width:176px;height:52px;background:#d7ccc8;"></div>
<div class="a t" style="top:1453.99px;font-size:26px;line-height:26px;color:#000;left:-403.0px;width:2000px;text-align:center;">9.5%</div>
<div class="a" style="left:685px;top:1431px;width:176px;height:52px;background:#b3e5fc;"></div>
<div class="a t" style="top:1453.99px;font-size:26px;line-height:26px;color:#000;left:-227.0px;width:2000px;text-align:center;">14.0%</div>
<div class="a" style="left:861px;top:1431px;width:176px;height:52px;background:#b3e5fc;"></div>
<div class="a t" style="top:1453.99px;font-size:26px;line-height:26px;color:#000;left:-51.0px;width:2000px;text-align:center;">14.0%</div>
<div class="a" style="left:1037px;top:1431px;width:176px;height:52px;background:#b3e5fc;"></div>
<div class="a t" style="top:1453.99px;font-size:26px;line-height:26px;color:#000;left:125.0px;width:2000px;text-align:center;">14.0%</div>
<div class="a" style="left:1213px;top:1431px;width:176px;height:52px;background:#b3e5fc;"></div>
<div class="a t" style="top:1453.99px;font-size:26px;line-height:26px;color:#000;left:301.0px;width:2000px;text-align:center;">14.0%</div>
<div class="a" style="left:1389px;top:1431px;width:176px;height:52px;background:#b3e5fc;"></div>
<div class="a t" style="top:1453.99px;font-size:26px;line-height:26px;color:#000;left:477.0px;width:2000px;text-align:center;">8.0%</div>
<div class="a" style="left:1565px;top:1431px;width:176px;height:52px;background:#b3e5fc;"></div>
<div class="a t" style="top:1453.99px;font-size:26px;line-height:26px;color:#000;left:653.0px;width:2000px;text-align:center;">8.0%</div>
<div class="a" style="left:1741px;top:1431px;width:176px;height:52px;background:#b3e5fc;"></div>
<div class="a t" style="top:1453.99px;font-size:26px;line-height:26px;color:#000;left:829.0px;width:2000px;text-align:center;">8.0%</div>
<div class="a" style="left:1917px;top:1431px;width:176px;height:52px;background:#b3e5fc;"></div>
<div class="a t" style="top:1453.99px;font-size:26px;line-height:26px;color:#000;left:1005.0px;width:2000px;text-align:center;">8.0%</div>
<div class="a" style="left:2093px;top:1431px;width:176px;height:52px;background:#b3e5fc;"></div>
<div class="a t" style="top:1453.99px;font-size:26px;line-height:26px;color:#000;left:1181.0px;width:2000px;text-align:center;">8.0%</div>
<div class="a" style="left:2269px;top:1431px;width:98px;height:52px;background:#b3e5fc;"></div>
<div class="a t" style="top:1453.99px;font-size:26px;line-height:26px;color:#000;left:1357.0px;width:2000px;text-align:center;">8.0%</div>
<div class="a t" style="top:1505.99px;font-size:26px;line-height:26px;color:#000;left:131px;">Capex</div>
<div class="a" style="left:509px;top:1483px;width:176px;height:52px;background:#b3e5fc;"></div>
<div class="a t" style="top:1505.99px;font-size:26px;line-height:26px;color:#000;left:-403.0px;width:2000px;text-align:center;">14.0%</div>
<div class="a" style="left:685px;top:1483px;width:176px;height:52px;background:#b3e5fc;"></div>
<div class="a t" style="top:1505.99px;font-size:26px;line-height:26px;color:#000;left:-227.0px;width:2000px;text-align:center;">14.0%</div>
<div class="a" style="left:861px;top:1483px;width:176px;height:52px;background:#b3e5fc;"></div>
<div class="a t" style="top:1505.99px;font-size:26px;line-height:26px;color:#000;left:-51.0px;width:2000px;text-align:center;">14.0%</div>
<div class="a" style="left:1037px;top:1483px;width:176px;height:52px;background:#b3e5fc;"></div>
<div class="a t" style="top:1505.99px;font-size:26px;line-height:26px;color:#000;left:125.0px;width:2000px;text-align:center;">14.0%</div>
<div class="a" style="left:1213px;top:1483px;width:176px;height:52px;background:#b3e5fc;"></div>
<div class="a t" style="top:1505.99px;font-size:26px;line-height:26px;color:#000;left:301.0px;width:2000px;text-align:center;">14.0%</div>
<div class="a" style="left:1389px;top:1483px;width:176px;height:52px;background:#b3e5fc;"></div>
<div class="a t" style="top:1505.99px;font-size:26px;line-height:26px;color:#000;left:477.0px;width:2000px;text-align:center;">8.0%</div>
<div class="a" style="left:1565px;top:1483px;width:176px;height:52px;background:#b3e5fc;"></div>
<div class="a t" style="top:1505.99px;font-size:26px;line-height:26px;color:#000;left:653.0px;width:2000px;text-align:center;">8.0%</div>
<div class="a" style="left:1741px;top:1483px;width:176px;height:52px;background:#b3e5fc;"></div>
<div class="a t" style="top:1505.99px;font-size:26px;line-height:26px;color:#000;left:829.0px;width:2000px;text-align:center;">8.0%</div>
<div class="a" style="left:1917px;top:1483px;width:176px;height:52px;background:#b3e5fc;"></div>
<div class="a t" style="top:1505.99px;font-size:26px;line-height:26px;color:#000;left:1005.0px;width:2000px;text-align:center;">8.0%</div>
<div class="a" style="left:2093px;top:1483px;width:176px;height:52px;background:#b3e5fc;"></div>
<div class="a t" style="top:1505.99px;font-size:26px;line-height:26px;color:#000;left:1181.0px;width:2000px;text-align:center;">8.0%</div>
<div class="a" style="left:2269px;top:1483px;width:98px;height:52px;background:#b3e5fc;"></div>
<div class="a t" style="top:1505.99px;font-size:26px;line-height:26px;color:#000;left:1357.0px;width:2000px;text-align:center;">8.0%</div>
<div class="a t" style="top:1557.99px;font-size:26px;line-height:26px;color:#000;left:131px;">WC (% of Rev)</div>
<div class="a" style="left:509px;top:1535px;width:176px;height:52px;background:#d7ccc8;"></div>
<div class="a t" style="top:1557.99px;font-size:26px;line-height:26px;color:#000;left:-403.0px;width:2000px;text-align:center;">16.0%</div>
<div class="a" style="left:685px;top:1535px;width:176px;height:52px;background:#b3e5fc;"></div>
<div class="a t" style="top:1557.99px;font-size:26px;line-height:26px;color:#000;left:-227.0px;width:2000px;text-align:center;">16.0%</div>
<div class="a" style="left:861px;top:1535px;width:176px;height:52px;background:#b3e5fc;"></div>
<div class="a t" style="top:1557.99px;font-size:26px;line-height:26px;color:#000;left:-51.0px;width:2000px;text-align:center;">16.0%</div>
<div class="a" style="left:1037px;top:1535px;width:176px;height:52px;background:#b3e5fc;"></div>
<div class="a t" style="top:1557.99px;font-size:26px;line-height:26px;color:#000;left:125.0px;width:2000px;text-align:center;">16.0%</div>
<div class="a" style="left:1213px;top:1535px;width:176px;height:52px;background:#b3e5fc;"></div>
<div class="a t" style="top:1557.99px;font-size:26px;line-height:26px;color:#000;left:301.0px;width:2000px;text-align:center;">16.0%</div>
<div class="a" style="left:1389px;top:1535px;width:176px;height:52px;background:#b3e5fc;"></div>
<div class="a t" style="top:1557.99px;font-size:26px;line-height:26px;color:#000;left:477.0px;width:2000px;text-align:center;">16.0%</div>
<div class="a" style="left:1565px;top:1535px;width:176px;height:52px;background:#b3e5fc;"></div>
<div class="a t" style="top:1557.99px;font-size:26px;line-height:26px;color:#000;left:653.0px;width:2000px;text-align:center;">16.0%</div>
<div class="a" style="left:1741px;top:1535px;width:176px;height:52px;background:#b3e5fc;"></div>
<div class="a t" style="top:1557.99px;font-size:26px;line-height:26px;color:#000;left:829.0px;width:2000px;text-align:center;">16.0%</div>
<div class="a" style="left:1917px;top:1535px;width:176px;height:52px;background:#b3e5fc;"></div>
<div class="a t" style="top:1557.99px;font-size:26px;line-height:26px;color:#000;left:1005.0px;width:2000px;text-align:center;">16.0%</div>
<div class="a" style="left:2093px;top:1535px;width:176px;height:52px;background:#b3e5fc;"></div>
<div class="a t" style="top:1557.99px;font-size:26px;line-height:26px;color:#000;left:1181.0px;width:2000px;text-align:center;">16.0%</div>
<div class="a" style="left:2269px;top:1535px;width:98px;height:52px;background:#b3e5fc;"></div>
<div class="a t" style="top:1557.99px;font-size:26px;line-height:26px;color:#000;left:1357.0px;width:2000px;text-align:center;">16.0%</div>
<div class="a t" style="top:1609.99px;font-size:26px;line-height:26px;color:#000;left:131px;">COGS (% of Rev)</div>
<div class="a" style="left:509px;top:1587px;width:176px;height:52px;background:#b3e5fc;"></div>
<div class="a t" style="top:1609.99px;font-size:26px;line-height:26px;color:#000;left:-403.0px;width:2000px;text-align:center;">85.7%</div>
<div class="a" style="left:685px;top:1587px;width:176px;height:52px;background:#b3e5fc;"></div>
<div class="a t" style="top:1609.99px;font-size:26px;line-height:26px;color:#000;left:-227.0px;width:2000px;text-align:center;">85.7%</div>
<div class="a" style="left:861px;top:1587px;width:176px;height:52px;background:#b3e5fc;"></div>
<div class="a t" style="top:1609.99px;font-size:26px;line-height:26px;color:#000;left:-51.0px;width:2000px;text-align:center;">85.7%</div>
<div class="a" style="left:1037px;top:1587px;width:176px;height:52px;background:#b3e5fc;"></div>
<div class="a t" style="top:1609.99px;font-size:26px;line-height:26px;color:#000;left:125.0px;width:2000px;text-align:center;">85.7%</div>
<div class="a" style="left:1213px;top:1587px;width:176px;height:52px;background:#b3e5fc;"></div>
<div class="a t" style="top:1609.99px;font-size:26px;line-height:26px;color:#000;left:301.0px;width:2000px;text-align:center;">85.7%</div>
<div class="a" style="left:1389px;top:1587px;width:176px;height:52px;background:#b3e5fc;"></div>
<div class="a t" style="top:1609.99px;font-size:26px;line-height:26px;color:#000;left:477.0px;width:2000px;text-align:center;">85.7%</div>
<div class="a" style="left:1565px;top:1587px;width:176px;height:52px;background:#b3e5fc;"></div>
<div class="a t" style="top:1609.99px;font-size:26px;line-height:26px;color:#000;left:653.0px;width:2000px;text-align:center;">85.7%</div>
<div class="a" style="left:1741px;top:1587px;width:176px;height:52px;background:#b3e5fc;"></div>
<div class="a t" style="top:1609.99px;font-size:26px;line-height:26px;color:#000;left:829.0px;width:2000px;text-align:center;">85.7%</div>
<div class="a" style="left:1917px;top:1587px;width:176px;height:52px;background:#b3e5fc;"></div>
<div class="a t" style="top:1609.99px;font-size:26px;line-height:26px;color:#000;left:1005.0px;width:2000px;text-align:center;">85.7%</div>
<div class="a" style="left:2093px;top:1587px;width:176px;height:52px;background:#b3e5fc;"></div>
<div class="a t" style="top:1609.99px;font-size:26px;line-height:26px;color:#000;left:1181.0px;width:2000px;text-align:center;">85.7%</div>
<div class="a" style="left:2269px;top:1587px;width:98px;height:52px;background:#b3e5fc;"></div>
<div class="a t" style="top:1609.99px;font-size:26px;line-height:26px;color:#000;left:1357.0px;width:2000px;text-align:center;">85.7%</div>
<div class="a" style="left:509px;top:1378px;width:1858px;height:2px;background:#000;"></div>
<div class="a" style="left:509px;top:1430px;width:1858px;height:2px;background:#000;"></div>
<div class="a" style="left:509px;top:1482px;width:1858px;height:2px;background:#000;"></div>
<div class="a" style="left:509px;top:1534px;width:1858px;height:2px;background:#000;"></div>
<div class="a" style="left:509px;top:1586px;width:1858px;height:2px;background:#000;"></div>
<div class="a" style="left:509px;top:1638px;width:1858px;height:2px;background:#000;"></div>
<div class="a" style="left:508px;top:1378px;width:2px;height:262px;background:#000;"></div>
<div class="a" style="left:684px;top:1378px;width:2px;height:262px;background:#000;"></div>
<div class="a" style="left:860px;top:1378px;width:2px;height:262px;background:#000;"></div>
<div class="a" style="left:1036px;top:1378px;width:2px;height:262px;background:#000;"></div>
<div class="a" style="left:1212px;top:1378px;width:2px;height:262px;background:#000;"></div>
<div class="a" style="left:1388px;top:1378px;width:2px;height:262px;background:#000;"></div>
<div class="a" style="left:1564px;top:1378px;width:2px;height:262px;background:#000;"></div>
<div class="a" style="left:1740px;top:1378px;width:2px;height:262px;background:#000;"></div>
<div class="a" style="left:1916px;top:1378px;width:2px;height:262px;background:#000;"></div>
<div class="a" style="left:2092px;top:1378px;width:2px;height:262px;background:#000;"></div>
<div class="a" style="left:2268px;top:1378px;width:2px;height:262px;background:#000;"></div>
<div class="a" style="left:2367px;top:274px;width:557px;height:1460px;background:#fafbfc;"></div>
<div class="a" style="left:2367px;top:274px;width:2px;height:1460px;background:#c6c6c6;"></div>
<div class="a" style="left:2369px;top:274px;width:555px;height:53px;background:#ececec;"></div>
<div class="a t" style="top:285.76px;font-size:31px;line-height:31px;color:#222;-webkit-text-stroke:0.5px #222;left:2402px;">Fontics</div>
<svg class="a" style="left:2869px;top:286px;" width="30" height="30" viewBox="0 0 30 30"><circle cx="15" cy="15" r="14" fill="#6e6e6e"/><path d="M10 10 L20 20 M20 10 L10 20" stroke="#fff" stroke-width="2.6" stroke-linecap="round"/></svg>
<div class="a t" style="top:339.97px;font-size:78px;line-height:78px;color:#253f8e;font-weight:700;left:2388px;">f</div>
<svg class="a" style="left:2414px;top:351px;" width="26" height="30" viewBox="0 0 26 30"><path d="M4 3 L20 27 M20 3 L4 27" stroke="#e2581b" stroke-width="5.5"/></svg>
<svg class="a" style="left:2438px;top:343px;" width="18" height="46" viewBox="0 0 18 46"><path d="M3 4.5 H12 V42 H3" fill="none" stroke="#e2581b" stroke-width="4.6"/></svg>
<div class="a t" style="top:345.33px;font-size:25.6px;line-height:25.6px;color:#64748b;left:2470px;">Get insights from [financial] models in</div>
<div class="a t" style="top:377.33px;font-size:25.6px;line-height:25.6px;color:#64748b;left:2470px;">minutes.</div>
<div class="a" style="left:2368px;top:422px;width:556px;height:2px;background:#e2e8f0;"></div>
<svg class="a" style="left:2440px;top:448px;" width="46" height="42" viewBox="0 0 46 42">
      <circle cx="19.5" cy="13" r="8.6" fill="none" stroke="#2b4a9a" stroke-width="3"/>
      <path d="M5 36.5 Q6 25 18.5 24.5 Q22 24.5 25 25.5" fill="none" stroke="#2b4a9a" stroke-width="3" stroke-linecap="round"/>
      <path d="M23 35 L34 24 Q37 21 40 24 Q42.5 27 39.5 30 L28.5 40 L22 41 Z" fill="none" stroke="#2b4a9a" stroke-width="3" stroke-linejoin="round"/>
    </svg>
<svg class="a" style="left:2566px;top:448px;" width="42" height="42" viewBox="0 0 42 42"><circle cx="21" cy="21" r="17.5" fill="none" stroke="#2b4a9a" stroke-width="3"/><path d="M15.5 16.5 Q15.5 11 21 11 Q26.5 11 26.5 16 Q26.5 19.5 21 21.5 V24" fill="none" stroke="#2b4a9a" stroke-width="3" stroke-linecap="round"/><circle cx="21" cy="30" r="1.8" fill="#2b4a9a"/></svg>
<svg class="a" style="left:2690px;top:448px;" width="42" height="42" viewBox="0 0 42 42"><path d="M6 4 H12 Q14 4 15 7 L17 13 Q18 16 15 18 L13 20 Q17 28 24 31 L26 29 Q28 26 31 27 L36 29 Q38 30 38 33 V37 Q38 40 35 40 Q20 39 11 28 Q4 19 3 7 Q3 4 6 4 Z" fill="none" stroke="#2b4a9a" stroke-width="3" stroke-linejoin="round"/></svg>
<svg class="a" style="left:2814px;top:448px;" width="42" height="42" viewBox="0 0 42 42"><path d="M12 12 Q5 17 5 25 Q5 39 21 39 Q37 39 37 25 Q37 17 30 12" fill="none" stroke="#8b1c1c" stroke-width="3" stroke-linecap="round"/><path d="M21 3 V19" stroke="#8b1c1c" stroke-width="3" stroke-linecap="round"/></svg>
<div class="a t" style="top:533.62px;font-size:28.8px;line-height:28.8px;color:#64748b;-webkit-text-stroke:0.5px #64748b;left:2402px;">Analysis</div>
<div class="a t" style="top:533.54px;font-size:28.9px;line-height:28.9px;color:#111;-webkit-text-stroke:0.5px #111;left:2576px;">Assurance</div>
<div class="a" style="left:2385px;top:580px;width:528px;height:4px;background:#e2e8f0;"></div>
<div class="a" style="left:2559px;top:580px;width:171px;height:5px;background:#23408e;"></div>
<div class="a" style="left:2390px;top:609px;width:518px;height:391px;background:#ffffff;border:1.5px solid #dde4ee;border-radius:11px;box-sizing:border-box;box-shadow:0 1px 2px rgba(0,0,0,0.03);"></div>
<div class="a t" style="top:641.34px;font-size:31.5px;line-height:31.5px;color:#0f172a;-webkit-text-stroke:0.9px #0f172a;left:2424px;">Highlight</div>
<svg class="a" style="left:2423px;top:708px;" width="40" height="40" viewBox="0 0 40 40"><rect x="0" y="0" width="40" height="40" rx="6" fill="#23408e"/><path d="M9 21 L17 28 L31 13" fill="none" stroke="#fff" stroke-width="3" stroke-linecap="round" stroke-linejoin="round"/></svg>
<div class="a" style="left:2479px;top:704px;width:136px;height:47px;background:#b3e5fc;border-radius:5px;"></div>
<div class="a t" style="top:715.26px;font-size:24.5px;line-height:24.5px;color:#111;-webkit-text-stroke:0.3px #111;letter-spacing:0.2px;left:1547.0px;width:2000px;text-align:center;">Formulas</div>
<svg class="a" style="left:2661px;top:708px;" width="40" height="40" viewBox="0 0 40 40"><rect x="0" y="0" width="40" height="40" rx="6" fill="#23408e"/><path d="M9 21 L17 28 L31 13" fill="none" stroke="#fff" stroke-width="3" stroke-linecap="round" stroke-linejoin="round"/></svg>
<div class="a" style="left:2717px;top:704px;width:146px;height:47px;background:#d7ccc8;border-radius:5px;"></div>
<div class="a t" style="top:715.26px;font-size:24.5px;line-height:24.5px;color:#111;-webkit-text-stroke:0.3px #111;letter-spacing:0.2px;left:1790.0px;width:2000px;text-align:center;">Constants</div>
<svg class="a" style="left:2423px;top:780px;" width="40" height="40" viewBox="0 0 40 40"><rect x="0" y="0" width="40" height="40" rx="6" fill="#23408e"/><path d="M9 21 L17 28 L31 13" fill="none" stroke="#fff" stroke-width="3" stroke-linecap="round" stroke-linejoin="round"/></svg>
<div class="a" style="left:2479px;top:776px;width:110px;height:47px;background:#d1c4e9;border-radius:5px;"></div>
<div class="a t" style="top:787.26px;font-size:24.5px;line-height:24.5px;color:#111;-webkit-text-stroke:0.3px #111;letter-spacing:0.2px;left:1534.0px;width:2000px;text-align:center;">Names</div>
<svg class="a" style="left:2661px;top:780px;" width="40" height="40" viewBox="0 0 40 40"><rect x="0" y="0" width="40" height="40" rx="6" fill="#23408e"/><path d="M9 21 L17 28 L31 13" fill="none" stroke="#fff" stroke-width="3" stroke-linecap="round" stroke-linejoin="round"/></svg>
<div class="a" style="left:2717px;top:776px;width:100px;height:47px;background:#ffccbc;border-radius:5px;"></div>
<div class="a t" style="top:787.26px;font-size:24.5px;line-height:24.5px;color:#111;-webkit-text-stroke:0.3px #111;letter-spacing:0.2px;left:1767.0px;width:2000px;text-align:center;">Errors</div>
<div class="a t" style="top:855.00px;font-size:25.4px;line-height:25.4px;color:#64748b;left:2424px;">Completed in 1.8s. [785 cells found]</div>
<div class="a" style="left:2588px;top:913px;width:126px;height:54px;background:#ffffff;border:1.5px solid #dfe5ee;border-radius:8px;box-sizing:border-box;"></div>
<div class="a t" style="top:926.99px;font-size:26px;line-height:26px;color:#111;-webkit-text-stroke:0.9px #111;left:1651.0px;width:2000px;text-align:center;">Clear</div>
<div class="a" style="left:2747px;top:913px;width:128px;height:54px;background:#23408e;border-radius:8px;"></div>
<div class="a t" style="top:926.99px;font-size:26px;line-height:26px;color:#fff;-webkit-text-stroke:0.9px #fff;left:1811.0px;width:2000px;text-align:center;">Run</div>
<div class="a" style="left:2390px;top:1023px;width:518px;height:451px;background:#ffffff;border:1.5px solid #dde4ee;border-radius:11px;box-sizing:border-box;box-shadow:0 1px 2px rgba(0,0,0,0.03);"></div>
<div class="a t" style="top:1055.34px;font-size:31.5px;line-height:31.5px;color:#0f172a;-webkit-text-stroke:0.9px #0f172a;left:2424px;">Audit</div>
<div class="a t" style="top:1130.99px;font-size:26px;line-height:26px;color:#111;-webkit-text-stroke:0.5px #111;left:2424px;">Audit type</div>
<div class="a" style="left:2582px;top:1118.5px;width:293px;height:54.5px;background:#ffffff;border:2px solid #dde3ec;border-radius:4px;box-sizing:border-box;"></div>
<div class="a t" style="top:1133.26px;font-size:24.5px;line-height:24.5px;color:#111;letter-spacing:0.3px;left:2608px;">Rows</div>
<div class="a t" style="top:1133.26px;font-size:24.5px;line-height:24.5px;color:#111;left:2676px;">[</div>
<svg class="a" style="left:2682px;top:1132px;" width="26" height="26" viewBox="0 0 26 26"><path d="M3 13 H20 M12.5 5.5 L20 13 L12.5 20.5" fill="none" stroke="#111" stroke-width="2.3"/></svg>
<div class="a t" style="top:1133.26px;font-size:24.5px;line-height:24.5px;color:#111;left:2703.5px;">]</div>
<svg class="a" style="left:2822px;top:1139px;" width="22" height="13.5" viewBox="0 0 22 13.5"><path d="M2 2 L11.0 11.5 L20 2" fill="none" stroke="#666" stroke-width="2.4" stroke-linecap="round" stroke-linejoin="round"/></svg>
<div class="a t" style="top:1215.49px;font-size:26px;line-height:26px;color:#111;-webkit-text-stroke:0.5px #111;left:2424px;">Start cell</div>
<div class="a" style="left:2582px;top:1203px;width:157px;height:54px;background:#ffffff;border:2px solid #dde3ec;border-radius:4px;box-sizing:border-box;"></div>
<div class="a t" style="top:1217.76px;font-size:24.5px;line-height:24.5px;color:#111;letter-spacing:0.3px;left:2608px;">C12</div>
<div class="a t" style="top:1303.49px;font-size:26px;line-height:26px;color:#111;-webkit-text-stroke:0.5px #111;left:2424px;">End cell</div>
<div class="a" style="left:2582px;top:1290.5px;width:157px;height:54.5px;background:#ffffff;border:2px solid #dde3ec;border-radius:4px;box-sizing:border-box;"></div>
<div class="a t" style="top:1305.76px;font-size:24.5px;line-height:24.5px;color:#111;letter-spacing:0.3px;left:2608px;">N27</div>
<svg class="a" style="left:2755px;top:1207px;" width="47" height="46" viewBox="0 0 47 46"><rect x="2" y="2" width="43" height="42" rx="6" fill="#fff" stroke="#c62828" stroke-width="3.2"/><path d="M15.5 15 L31.5 31 M31.5 15 L15.5 31" stroke="#c62828" stroke-width="3.6"/></svg>
<svg class="a" style="left:2819px;top:1207px;" width="47" height="46" viewBox="0 0 47 46"><rect x="2" y="2" width="43" height="42" rx="6" fill="#fff" stroke="#1b7a3a" stroke-width="3.2"/><path d="M15 24 L21 29 L32 18" fill="none" stroke="#1b7a3a" stroke-width="3.6"/></svg>
<svg class="a" style="left:2755px;top:1295px;" width="47" height="46" viewBox="0 0 47 46"><rect x="2" y="2" width="43" height="42" rx="6" fill="#fff" stroke="#c62828" stroke-width="3.2"/><path d="M15.5 15 L31.5 31 M31.5 15 L15.5 31" stroke="#c62828" stroke-width="3.6"/></svg>
<svg class="a" style="left:2819px;top:1295px;" width="47" height="46" viewBox="0 0 47 46"><rect x="2" y="2" width="43" height="42" rx="6" fill="#fff" stroke="#1b7a3a" stroke-width="3.2"/><path d="M15 24 L21 29 L32 18" fill="none" stroke="#1b7a3a" stroke-width="3.6"/></svg>
<div class="a" style="left:2587px;top:1387px;width:127px;height:54px;background:#ffffff;border:1.5px solid #dfe5ee;border-radius:8px;box-sizing:border-box;"></div>
<div class="a t" style="top:1400.99px;font-size:26px;line-height:26px;color:#111;-webkit-text-stroke:0.9px #111;left:1650.5px;width:2000px;text-align:center;">Clear</div>
<div class="a" style="left:2747px;top:1387px;width:128px;height:54px;background:#23408e;border-radius:8px;"></div>
<div class="a t" style="top:1400.99px;font-size:26px;line-height:26px;color:#fff;-webkit-text-stroke:0.9px #fff;left:1811.0px;width:2000px;text-align:center;">Run</div>
<div class="a" style="left:2390px;top:1497px;width:518px;height:184px;background:#ffffff;border:1.5px solid #dde4ee;border-radius:11px;box-sizing:border-box;box-shadow:0 1px 2px rgba(0,0,0,0.03);"></div>
<div class="a t" style="top:1529.34px;font-size:31.5px;line-height:31.5px;color:#0f172a;-webkit-text-stroke:0.9px #0f172a;left:2424px;">Trace</div>
<div class="a" style="left:2428px;top:1593px;width:126px;height:54px;background:#eff6ff;border:1.5px solid #dfe5ee;border-radius:8px;box-sizing:border-box;"></div>
<div class="a t" style="top:1606.99px;font-size:26px;line-height:26px;color:#111;-webkit-text-stroke:0.9px #111;left:1491.0px;width:2000px;text-align:center;">Add</div>
<div class="a" style="left:2588px;top:1593px;width:126px;height:54px;background:#ffffff;border:1.5px solid #dfe5ee;border-radius:8px;box-sizing:border-box;"></div>
<div class="a t" style="top:1606.99px;font-size:26px;line-height:26px;color:#111;-webkit-text-stroke:0.9px #111;left:1651.0px;width:2000px;text-align:center;">Clear</div>
<div class="a" style="left:2747px;top:1593px;width:128px;height:54px;background:#23408e;border-radius:8px;"></div>
<div class="a t" style="top:1606.99px;font-size:26px;line-height:26px;color:#fff;-webkit-text-stroke:0.9px #fff;left:1811.0px;width:2000px;text-align:center;">Run</div>
<div class="a" style="left:2367px;top:1732px;width:557px;height:2px;background:#a5a5a5;"></div>
</body></html>
